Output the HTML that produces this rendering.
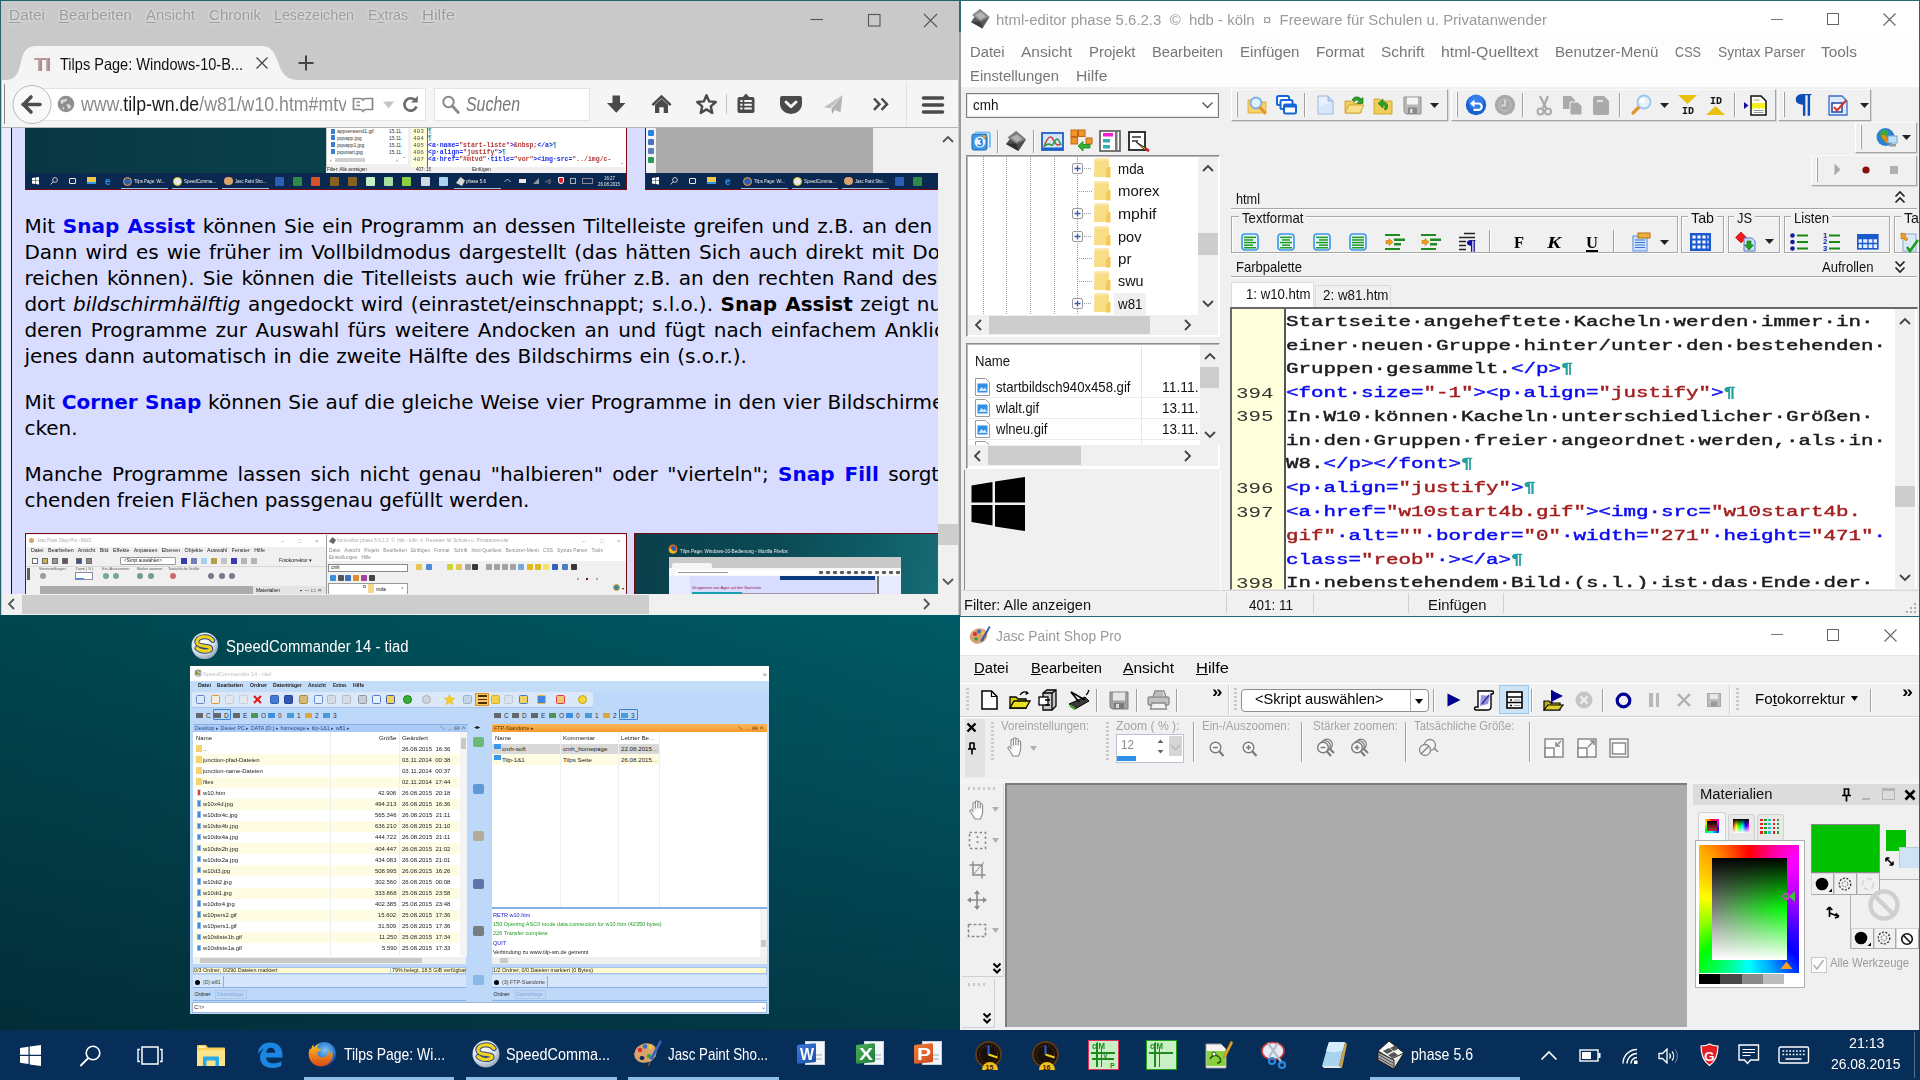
<!DOCTYPE html>
<html lang="de">
<head>
<meta charset="utf-8">
<title>Windows 10 Corner Snap</title>
<style>
*{box-sizing:border-box;margin:0;padding:0}
html,body{width:1920px;height:1080px;overflow:hidden}
body{position:relative;font-family:"Liberation Sans",sans-serif;font-size:15px;color:#000;background:#0a4a55}
.t{position:absolute;white-space:pre;line-height:1;transform-origin:0 0}
.b{position:absolute}
svg.b{overflow:visible}
.abs0{position:absolute;width:0;height:0}
.jl{position:absolute;white-space:nowrap;line-height:1;font-family:"DejaVu Sans",sans-serif;font-size:20px;color:#000}
#desk{position:absolute;left:0;top:0;width:1920px;height:1080px;background:linear-gradient(90deg,rgba(0,0,0,.22) 0px,rgba(0,0,0,0) 960px),linear-gradient(180deg,#005a65 615px,#033a48 1030px)}
#ff{position:absolute;left:0;top:0;width:960px;height:615px;background:#c9c9c9;overflow:hidden;border-top:1px solid #1d6570;border-left:1px solid #2a5f6c;border-right:1px solid #9c9c9c}
#ff u{text-decoration-thickness:1px;text-underline-offset:2px}
#he{position:absolute;left:960px;top:0;width:960px;height:616px;background:#f0f0f0;overflow:hidden;border-top:1px solid #2a6a75;border-left:1px solid #9c9c9c;border-right:1px solid #1b6b78}
#psp{position:absolute;left:960px;top:616px;width:960px;height:414px;background:#f0f0f0;overflow:hidden;border-top:1px solid #1b6b78;border-right:1px solid #1b6b78}
#sc{position:absolute;left:0;top:0;width:0;height:0}
#tb{position:absolute;left:0;top:1030px;width:1920px;height:50px;background:#062e58;overflow:hidden}

.code{font-family:"Liberation Mono",monospace}
.code span{font-weight:normal !important;-webkit-text-stroke:0.45px currentColor}

</style>
</head>
<body>
<div id="desk"></div>
<!-- ================= FIREFOX ================= -->
<div id="ff">
<div class="abs0" style="left:-1px;top:-1px">
<span class="t" style="left:9.0px;top:6.9px;font-size:15.5px;color:#9c9c9c;transform:scaleX(0.9949);text-shadow:0 0 4px #e4e4e4,0 0 2px #e0e0e0;"><u>D</u>atei</span>
<span class="t" style="left:59.0px;top:6.9px;font-size:15.5px;color:#9c9c9c;transform:scaleX(0.9737);text-shadow:0 0 4px #e4e4e4,0 0 2px #e0e0e0;"><u>B</u>earbeiten</span>
<span class="t" style="left:146.0px;top:6.9px;font-size:15.5px;color:#9c9c9c;transform:scaleX(0.9640);text-shadow:0 0 4px #e4e4e4,0 0 2px #e0e0e0;"><u>A</u>nsicht</span>
<span class="t" style="left:209.0px;top:6.9px;font-size:15.5px;color:#9c9c9c;transform:scaleX(0.9736);text-shadow:0 0 4px #e4e4e4,0 0 2px #e0e0e0;"><u>C</u>hronik</span>
<span class="t" style="left:274.0px;top:6.9px;font-size:15.5px;color:#9c9c9c;transform:scaleX(0.9191);text-shadow:0 0 4px #e4e4e4,0 0 2px #e0e0e0;"><u>L</u>esezeichen</span>
<span class="t" style="left:368.0px;top:6.9px;font-size:15.5px;color:#9c9c9c;transform:scaleX(0.9106);text-shadow:0 0 4px #e4e4e4,0 0 2px #e0e0e0;">E<u>x</u>tras</span>
<span class="t" style="left:422.0px;top:6.9px;font-size:15.5px;color:#9c9c9c;transform:scaleX(1.0642);text-shadow:0 0 4px #e4e4e4,0 0 2px #e0e0e0;"><u>H</u>ilfe</span>
<svg class="b" style="left:805px;top:8px;" width="140" height="24" viewBox="0 0 140 24"><path d="M5.500 11.500h12.500" stroke="#555" stroke-width="1.100" fill="none"/><rect x="63.500" y="6.500" width="11.500" height="11.500" fill="none" stroke="#555" stroke-width="1.100"/><path d="M119 6l13 13M132 6l-13 13" stroke="#555" stroke-width="1.100" fill="none"/></svg>
<svg class="b" style="left:4px;top:44px;" width="300" height="38" viewBox="0 0 300 38"><path d="M0 36 C12 36 14 30 17 18 C20 5 24 2 34 2 H256 C268 2 270 8 274 18 C278 30 282 36 296 36 V38 H0 Z" fill="#f5f5f5"/></svg>
<div class="b" style="left:32px;top:53px;width:20px;height:20px;background:#f4f2f2;"></div>
<span class="t" style="left:34.0px;top:54.9px;font-size:19px;font-weight:bold;color:#b89a9a;transform:scaleX(0.9476);text-shadow:1px 0 0 #8e6f72;">Tl</span>
<span class="t" style="left:60.0px;top:55.5px;font-size:16.5px;color:#111;transform:scaleX(0.8817);">Tilps Page: Windows-10-B...</span>
<svg class="b" style="left:255px;top:56px;" width="14" height="14" viewBox="0 0 14 14"><path d="M1.5 1.5l11 11M12.5 1.5l-11 11" stroke="#444" stroke-width="1.3" fill="none"/></svg>
<svg class="b" style="left:297px;top:54px;" width="18" height="18" viewBox="0 0 18 18"><path d="M9 1.5v15M1.5 9h15" stroke="#444" stroke-width="2" fill="none"/></svg>
<div class="b" style="left:2px;top:80px;width:956px;height:48px;background:#f5f5f5;border-bottom:1px solid #b5b5b5;"></div>
<div class="b" style="left:4px;top:84px;width:1px;height:40px;background:#8a8a8a;"></div>
<div class="b" style="left:40px;top:88px;width:386px;height:33px;background:#fff;border:1px solid #e3e3e3;"></div>
<div class="b" style="left:434px;top:88px;width:156px;height:33px;background:#fff;border:1px solid #e3e3e3;"></div>
<svg class="b" style="left:11px;top:84px;" width="42" height="42" viewBox="0 0 42 42"><circle cx="21" cy="20.5" r="19" fill="#f9f9f9" stroke="#b9b9b9" stroke-width="1"/><path d="M12 20.5h17M12.5 20.5l7.5-7.5M12.5 20.5l7.5 7.5" stroke="#4c4c4c" stroke-width="3.6" fill="none" stroke-linecap="round" stroke-linejoin="round"/></svg>
<svg class="b" style="left:57px;top:95px;" width="18" height="18" viewBox="0 0 18 18"><circle cx="9" cy="9" r="8.3" fill="#8f8f8f"/><path d="M4 5c2-1 3 0 4-1s2 0 2 1-2 2-3 2-1 2-2 2-2-2-1-4zM10 9c2 0 4 1 4 2s-1 3-2 3-1-2-2-3 0-2 0-2zM6 12c1 0 2 1 1 2s-2 0-1-2z" fill="#d9d9d9"/></svg>
<div class="b" style="left:80px;top:90px;width:266px;height:28px;overflow:hidden;"><span class="t" style="left:1.0px;top:4.1px;font-size:20.5px;color:#8a8a8a;transform:scaleX(0.8647);">www.<span style="color:#1a1a1a">tilp-wn.de</span>/w81/w10.htm#mtv</span></div>
<svg class="b" style="left:352px;top:96px;" width="22" height="18" viewBox="0 0 22 18"><path d="M1.5 2.5h6.5c1.8 0 3 .8 3 2.2c0-1.400 1.200-2.200 3-2.200h6.500v11h-6.500c-1.200 0-2.300.6-3 1.700c-.7-1.100-1.800-1.700-3-1.700h-6.500z" fill="none" stroke="#8a8a8a" stroke-width="1.7"/><path d="M4.500 6h3.500M4.500 9.500h3.500" stroke="#8a8a8a" stroke-width="1.500"/></svg>
<svg class="b" style="left:382px;top:100px;" width="14" height="10" viewBox="0 0 14 10"><path d="M1 1.500h11l-5.500 7z" fill="#c4c4c4"/></svg>
<svg class="b" style="left:401px;top:95px;" width="18" height="18" viewBox="0 0 18 18"><path d="M14.200 5.200a6.200 6.200 0 1 0 1.300 6.300" fill="none" stroke="#6b6b6b" stroke-width="2.600"/><path d="M10 7.500h6.800v-6.800z" fill="#6b6b6b"/></svg>
<svg class="b" style="left:441px;top:94px;" width="20" height="22" viewBox="0 0 20 22"><circle cx="7.500" cy="8" r="5.200" fill="none" stroke="#8a8a8a" stroke-width="2"/><path d="M11.300 12l6 6.500" stroke="#8a8a8a" stroke-width="2.800" stroke-linecap="round"/></svg>
<span class="t" style="left:466.0px;top:94.5px;font-size:19.5px;font-style:italic;color:#777;transform:scaleX(0.8165);">Suchen</span>
<svg class="b" style="left:606px;top:94px;" width="21" height="20" viewBox="0 0 21 20"><path d="M6.500 1.500h7.500v7.500h5.500l-9.200 9.800l-9.300-9.800h5.500z" fill="#4a4a4a"/></svg>
<svg class="b" style="left:651px;top:94px;" width="21" height="20" viewBox="0 0 21 20"><path d="M10.500 0.800l10 9.400l-1.700 1.800l-8.300-7.800l-8.300 7.800l-1.700-1.800z" fill="#4a4a4a"/><path d="M4 10.800l6.500-6l6.500 6v8.200h-4.300v-5.800h-4.400v5.800h-4.300z" fill="#4a4a4a"/></svg>
<svg class="b" style="left:695px;top:93px;" width="23" height="22" viewBox="0 0 23 22"><path d="M11.500 2.300l2.700 6.100l6.600.6l-5 4.400l1.500 6.500l-5.800-3.500l-5.800 3.500l1.500-6.500l-5-4.400l6.600-.6z" fill="none" stroke="#4a4a4a" stroke-width="2.400" stroke-linejoin="round"/></svg>
<div class="b" style="left:726px;top:94px;width:1px;height:20px;background:#c6c6c6;"></div>
<svg class="b" style="left:736px;top:93px;" width="20" height="21" viewBox="0 0 20 21"><path d="M10 0.500l3.200 3.500h3.300a2 2 0 0 1 2 2v12a2 2 0 0 1-2 2h-13a2 2 0 0 1-2-2v-12a2 2 0 0 1 2-2h3.300z" fill="#4a4a4a"/><path d="M4.300 8h2.200M8.300 8h7.500M4.300 11.800h2.200M8.300 11.800h7.500M4.300 15.600h2.200M8.300 15.600h7.500" stroke="#f7f7f7" stroke-width="2"/></svg>
<svg class="b" style="left:779px;top:95px;" width="24" height="20" viewBox="0 0 24 20"><path d="M3 1h18a2 2 0 0 1 2 2v5.500a11 10.500 0 0 1-22 0v-5.500a2 2 0 0 1 2-2z" fill="#4a4a4a"/><path d="M7 7l5 4.800l5-4.800" fill="none" stroke="#f7f7f7" stroke-width="2.800" stroke-linecap="round" stroke-linejoin="round"/></svg>
<svg class="b" style="left:823px;top:94px;" width="21" height="21" viewBox="0 0 21 21"><path d="M19.500 1l-18.500 12.200l6.200 1.300z" fill="#c2c2c2"/><path d="M19.500 1l-11 13.500l9 3.800z" fill="#b4b4b4"/><path d="M8.500 14.500l0.500 5.500l2.700-4z" fill="#a8a8a8"/></svg>
<svg class="b" style="left:872px;top:97px;" width="18" height="15" viewBox="0 0 18 15"><path d="M2 1.500l5.500 5.700l-5.500 5.700M9.500 1.500l5.500 5.700l-5.500 5.700" fill="none" stroke="#4a4a4a" stroke-width="2.500"/></svg>
<div class="b" style="left:906px;top:82px;width:1px;height:44px;background:#e2e2e2;"></div>
<svg class="b" style="left:921px;top:95px;" width="24" height="20" viewBox="0 0 24 20"><path d="M2.500 3h19M2.500 10h19M2.500 17h19" stroke="#4a4a4a" stroke-width="3.600" stroke-linecap="round"/></svg>
<div class="b" style="left:2px;top:128px;width:936px;height:466px;background:#ececff;overflow:hidden"><div class="abs0" style="left:-2px;top:-128px">
<div class="b" style="left:11px;top:128px;width:927px;height:470px;background:#d8dcff;border-left:1.300px solid #10102a;"></div>
<div class="b" style="left:25px;top:124px;width:602px;height:66px;background:#0a3e48;border:1px solid #7a0a12;overflow:hidden;background:linear-gradient(90deg,#093741,#0a414b 50%,#093c46);"></div>
<div class="b" style="left:326px;top:128px;width:300px;height:45.5px;background:#f0f0f0;"></div>
<div class="b" style="left:327px;top:128px;width:81px;height:36px;background:#fff;"></div>
<div class="b" style="left:411px;top:128px;width:215px;height:39px;background:#fff;"></div>
<div class="b" style="left:411px;top:128px;width:16px;height:39px;background:#ffffd8;"></div>
<div class="b" style="left:427px;top:128px;width:0.6px;height:39px;background:#666;"></div>
<div class="b" style="left:331px;top:128.5px;width:3.5px;height:5px;background:#3a7fd0;"></div>
<span class="t" style="left:337.0px;top:129.3px;font-size:5px;color:#333;">appverwend1.gif</span>
<span class="t" style="left:389.0px;top:129.3px;font-size:5px;color:#333;">15.11.</span>
<span class="t" style="left:413.0px;top:129.4px;font-size:6px;font-family:'Liberation Mono',monospace;color:#555;transform:scaleX(1.0184);">403</span>
<div class="b" style="left:331px;top:135.4px;width:3.5px;height:5px;background:#3a7fd0;"></div>
<span class="t" style="left:337.0px;top:136.2px;font-size:5px;color:#333;">pqsapp.jpg</span>
<span class="t" style="left:389.0px;top:136.2px;font-size:5px;color:#333;">15.11.</span>
<span class="t" style="left:413.0px;top:136.3px;font-size:6px;font-family:'Liberation Mono',monospace;color:#555;transform:scaleX(1.0184);">404</span>
<div class="b" style="left:331px;top:142.3px;width:3.5px;height:5px;background:#3a7fd0;"></div>
<span class="t" style="left:337.0px;top:143.1px;font-size:5px;color:#333;">pqsapp1.jpg</span>
<span class="t" style="left:389.0px;top:143.1px;font-size:5px;color:#333;">15.11.</span>
<span class="t" style="left:413.0px;top:143.2px;font-size:6px;font-family:'Liberation Mono',monospace;color:#555;transform:scaleX(1.0184);">405</span>
<div class="b" style="left:331px;top:149.2px;width:3.5px;height:5px;background:#3a7fd0;"></div>
<span class="t" style="left:337.0px;top:150.0px;font-size:5px;color:#333;">pqsstart.jpg</span>
<span class="t" style="left:389.0px;top:150.0px;font-size:5px;color:#333;">15.11.</span>
<span class="t" style="left:413.0px;top:150.1px;font-size:6px;font-family:'Liberation Mono',monospace;color:#555;transform:scaleX(1.0184);">406</span>
<span class="t" style="left:413.0px;top:157.0px;font-size:6px;font-family:'Liberation Mono',monospace;color:#555;transform:scaleX(1.0184);">407</span>
<span class="t" style="left:427.5px;top:128.5px;font-size:6.5px;font-family:'Liberation Mono',monospace;font-weight:bold;transform:scaleX(0.9999);"><span style="color:#30a0a0">¶</span></span>
<span class="t" style="left:427.5px;top:135.8px;font-size:6.5px;font-family:'Liberation Mono',monospace;font-weight:bold;transform:scaleX(0.9999);"><span style="color:#30a0a0">¶</span></span>
<span class="t" style="left:427.5px;top:143.0px;font-size:6.5px;font-family:'Liberation Mono',monospace;font-weight:bold;transform:scaleX(0.9999);"><span style="color:#1c2cf0">&lt;a·name=</span><span style="color:#b03838">"start-liste"</span><span style="color:#1c2cf0">&gt;</span><span style="color:#b03838">&amp;nbsp;</span><span style="color:#1c2cf0">&lt;/a&gt;</span><span style="color:#30a0a0">¶</span></span>
<span class="t" style="left:427.5px;top:150.0px;font-size:6.5px;font-family:'Liberation Mono',monospace;font-weight:bold;transform:scaleX(0.9999);"><span style="color:#1c2cf0">&lt;p·align=</span><span style="color:#b03838">"justify"</span><span style="color:#1c2cf0">&gt;</span><span style="color:#30a0a0">¶</span></span>
<span class="t" style="left:427.5px;top:157.3px;font-size:6.5px;font-family:'Liberation Mono',monospace;font-weight:bold;transform:scaleX(0.9999);"><span style="color:#1c2cf0">&lt;a·href=</span><span style="color:#b03838">"#mtvd"</span><span style="color:#1c2cf0">·title=</span><span style="color:#b03838">"vor"</span><span style="color:#1c2cf0">&gt;&lt;img·src=</span><span style="color:#b03838">"../img/c-</span></span>
<div class="b" style="left:335px;top:158px;width:30px;height:4px;background:#d0d0d0;"></div>
<span class="t" style="left:330.0px;top:157.8px;font-size:5px;color:#555;">‹</span>
<span class="t" style="left:396.0px;top:157.8px;font-size:5px;color:#555;">›</span>
<span class="t" style="left:402.0px;top:153.8px;font-size:5px;color:#555;">⌄</span>
<span class="t" style="left:620.0px;top:159.8px;font-size:5px;color:#555;">⌄</span>
<div class="b" style="left:326px;top:128px;width:1px;height:40px;background:#c8c8c8;"></div>
<span class="t" style="left:327.0px;top:167.4px;font-size:5.2px;color:#222;transform:scaleX(0.8814);">Filter: Alle anzeigen</span>
<span class="t" style="left:416.0px;top:167.4px;font-size:5.2px;color:#222;transform:scaleX(0.8646);">407: 15</span>
<span class="t" style="left:472.0px;top:167.4px;font-size:5.2px;color:#222;transform:scaleX(0.9255);">Einfügen</span>
<div class="b" style="left:26px;top:173px;width:600px;height:16px;background:#0b2950;"></div>
<div class="b" style="left:645px;top:124px;width:300px;height:66px;background:#ababab;border:1px solid #7a0a12;"></div>
<div class="b" style="left:646px;top:128px;width:10px;height:45px;background:#f4f4f4;"></div>
<div class="b" style="left:648px;top:130px;width:6px;height:6px;background:#2a80e0;border-radius:1px;"></div>
<div class="b" style="left:648px;top:139px;width:6px;height:6px;background:#4a70c0;border-radius:1px;"></div>
<div class="b" style="left:648px;top:148px;width:6px;height:6px;background:#5a80c0;border-radius:1px;"></div>
<div class="b" style="left:648px;top:157px;width:6px;height:6px;background:#2a9a5a;border-radius:1px;"></div>
<div class="b" style="left:873px;top:128px;width:71px;height:45px;background:#f0f0f0;"></div>
<div class="b" style="left:646px;top:173px;width:298px;height:16px;background:#0b2950;"></div>
<svg class="b" style="left:32px;top:177px;" width="7" height="7" viewBox="0 0 7 7"><path d="M0 1l3-.500v3h-3zM3.500.400l3.500-.400v3.500h-3.500zM0 4h3v3l-3-.500zM3.500 4h3.500v3.500l-3.500-.500z" fill="#fff"/></svg><svg class="b" style="left:50px;top:177px;" width="8" height="8" viewBox="0 0 8 8"><circle cx="5" cy="3" r="2.400" fill="none" stroke="#e8e8e8" stroke-width=".800"/><path d="M3.300 4.700l-2.800 2.800" stroke="#e8e8e8" stroke-width=".900"/></svg><div class="b" style="left:69px;top:178px;width:7px;height:6px;border:0.800px solid #e8e8e8;border-radius:1px;"></div><div class="b" style="left:87px;top:177px;width:9px;height:7px;background:#f1c84a;border-bottom:2px solid #2b9ae8;"></div><span class="t" style="left:105.0px;top:176.5px;font-size:10px;font-weight:bold;color:#2b8fe0;">e</span><div class="b" style="left:123px;top:176.5px;width:9px;height:9px;background:#e66a1c;border-radius:5px;border:1.500px solid #f0a030;background:#2b5fb4;"></div><span class="t" style="left:134.0px;top:179.0px;font-size:5.3px;color:#f0f0f0;transform:scaleX(0.8076);">Tilps Page: Wi...</span><div class="b" style="left:173px;top:176.5px;width:9px;height:9px;background:#e8e8e8;border-radius:5px;border:1px solid #d8c030;"></div><span class="t" style="left:184.0px;top:179.0px;font-size:5.3px;color:#f0f0f0;transform:scaleX(0.8356);">SpeedComma...</span><div class="b" style="left:224px;top:177px;width:9px;height:8px;background:#d9a26c;border-radius:4px;"></div><span class="t" style="left:235.0px;top:179.0px;font-size:5.3px;color:#f0f0f0;transform:scaleX(0.7795);">Jasc Paint Sho...</span><div class="b" style="left:121px;top:187.5px;width:47px;height:1px;background:#9ac0e8;"></div><div class="b" style="left:172px;top:187.5px;width:46px;height:1px;background:#9ac0e8;"></div><div class="b" style="left:222px;top:187.5px;width:47px;height:1px;background:#9ac0e8;"></div><div class="b" style="left:275.0px;top:176.5px;width:9px;height:9px;background:#2b5fb4;border-radius:1px;"></div><div class="b" style="left:293.2px;top:176.5px;width:9px;height:9px;background:#2e8b45;border-radius:1px;"></div><div class="b" style="left:311.4px;top:176.5px;width:9px;height:9px;background:#d6532a;border-radius:1px;"></div><div class="b" style="left:329.6px;top:176.5px;width:9px;height:9px;background:#8a6020;border-radius:1px;"></div><div class="b" style="left:347.8px;top:176.5px;width:9px;height:9px;background:#8a6020;border-radius:1px;"></div><div class="b" style="left:366.0px;top:176.5px;width:9px;height:9px;background:#c9efc4;border-radius:1px;"></div><div class="b" style="left:384.2px;top:176.5px;width:9px;height:9px;background:#a8e0a0;border-radius:1px;"></div><div class="b" style="left:402.4px;top:176.5px;width:9px;height:9px;background:#8ad040;border-radius:1px;"></div><div class="b" style="left:420.6px;top:176.5px;width:9px;height:9px;background:#d0d8e8;border-radius:1px;"></div><div class="b" style="left:438.79999999999995px;top:176.5px;width:9px;height:9px;background:#a8d4f0;border-radius:1px;"></div>
<svg class="b" style="left:652px;top:177px;" width="7" height="7" viewBox="0 0 7 7"><path d="M0 1l3-.500v3h-3zM3.500.400l3.500-.400v3.500h-3.500zM0 4h3v3l-3-.500zM3.500 4h3.500v3.500l-3.500-.500z" fill="#fff"/></svg><svg class="b" style="left:670px;top:177px;" width="8" height="8" viewBox="0 0 8 8"><circle cx="5" cy="3" r="2.400" fill="none" stroke="#e8e8e8" stroke-width=".800"/><path d="M3.300 4.700l-2.800 2.800" stroke="#e8e8e8" stroke-width=".900"/></svg><div class="b" style="left:689px;top:178px;width:7px;height:6px;border:0.800px solid #e8e8e8;border-radius:1px;"></div><div class="b" style="left:707px;top:177px;width:9px;height:7px;background:#f1c84a;border-bottom:2px solid #2b9ae8;"></div><span class="t" style="left:725.0px;top:176.5px;font-size:10px;font-weight:bold;color:#2b8fe0;">e</span><div class="b" style="left:743px;top:176.5px;width:9px;height:9px;background:#e66a1c;border-radius:5px;border:1.500px solid #f0a030;background:#2b5fb4;"></div><span class="t" style="left:754.0px;top:179.0px;font-size:5.3px;color:#f0f0f0;transform:scaleX(0.8076);">Tilps Page: Wi...</span><div class="b" style="left:793px;top:176.5px;width:9px;height:9px;background:#e8e8e8;border-radius:5px;border:1px solid #d8c030;"></div><span class="t" style="left:804.0px;top:179.0px;font-size:5.3px;color:#f0f0f0;transform:scaleX(0.8356);">SpeedComma...</span><div class="b" style="left:844px;top:177px;width:9px;height:8px;background:#d9a26c;border-radius:4px;"></div><span class="t" style="left:855.0px;top:179.0px;font-size:5.3px;color:#f0f0f0;transform:scaleX(0.7795);">Jasc Paint Sho...</span><div class="b" style="left:741px;top:187.5px;width:47px;height:1px;background:#9ac0e8;"></div><div class="b" style="left:792px;top:187.5px;width:46px;height:1px;background:#9ac0e8;"></div><div class="b" style="left:842px;top:187.5px;width:47px;height:1px;background:#9ac0e8;"></div><div class="b" style="left:895.0px;top:176.5px;width:9px;height:9px;background:#2b5fb4;border-radius:1px;"></div><div class="b" style="left:913.2px;top:176.5px;width:9px;height:9px;background:#2e8b45;border-radius:1px;"></div><div class="b" style="left:931.4px;top:176.5px;width:9px;height:9px;background:#d6532a;border-radius:1px;"></div>
<div class="b" style="left:922px;top:173px;width:16px;height:16px;background:#0b2950;"></div>
<svg class="b" style="left:455.5px;top:176.5px;" width="9" height="9" viewBox="0 0 9 9"><path d="M4.500 0l4.500 3.500l-3 5.500l-6-3z" fill="#d8d8d8"/></svg>
<span class="t" style="left:466.0px;top:179.0px;font-size:5.3px;color:#f0f0f0;transform:scaleX(0.8591);">phase 5.6</span>
<div class="b" style="left:454px;top:187.5px;width:47px;height:1px;background:#9ac0e8;"></div>
<svg class="b" style="left:504px;top:178px;" width="7" height="5" viewBox="0 0 7 5"><path d="M.500 4l3-3l3 3" fill="none" stroke="#ddd" stroke-width=".800"/></svg>
<div class="b" style="left:519px;top:178.5px;width:7px;height:4.5px;background:#e8e8e8;"></div>
<div class="b" style="left:533px;top:178px;width:6px;height:6px;background:#8a98a8;clip-path:polygon(100% 0,100% 100%,0 100%);"></div>
<span class="t" style="left:545.0px;top:179.3px;font-size:5px;color:#ccc;">◁)</span>
<div class="b" style="left:558px;top:177px;width:6px;height:7px;background:#e41e26;border-radius:1px 1px 3px 3px;border:0.600px solid #fff;"></div>
<div class="b" style="left:570px;top:177.5px;width:6px;height:6px;border:0.700px solid #aab;"></div>
<div class="b" style="left:582px;top:178px;width:11px;height:5.5px;border:0.700px solid #889;"></div>
<span class="t" style="left:604.0px;top:177.1px;font-size:4.6px;color:#e8e8e8;transform:scaleX(0.9556);">16:27</span>
<span class="t" style="left:598.0px;top:183.1px;font-size:4.6px;color:#e8e8e8;transform:scaleX(0.9556);">26.08.2015</span>
<div class="jl" style="left:24.4px;top:215.6px;word-spacing:1.36px">Mit <span style="font-weight:bold;color:#0000f0;">Snap Assist</span> können Sie ein Programm an dessen Tiltelleiste greifen und z.B. an den Bildschirmrand</div>
<div class="jl" style="left:24.4px;top:241.6px;word-spacing:1.68px">Dann wird es wie früher im Vollbildmodus dargestellt (das hätten Sich auch direkt mit Doppelklick</div>
<div class="jl" style="left:24.4px;top:267.6px;word-spacing:1.85px">reichen können). Sie können die Titelleists auch wie früher z.B. an den rechten Rand des Bildschirms</div>
<div class="jl" style="left:24.4px;top:293.6px;word-spacing:1.20px">dort <span style="font-style:italic;">bildschirmhälftig</span> angedockt wird (einrastet/einschnappt; s.l.o.). <span style="font-weight:bold;">Snap Assist</span> zeigt nun die an</div>
<div class="jl" style="left:24.4px;top:319.6px;word-spacing:2.26px">deren Programme zur Auswahl fürs weitere Andocken an und fügt nach einfachem Anklicken</div>
<div class="jl" style="left:24.4px;top:345.6px;word-spacing:0.72px">jenes dann automatisch in die zweite Hälfte des Bildschirms ein (s.o.r.).</div>
<div class="jl" style="left:24.4px;top:391.6px;word-spacing:0.33px">Mit <span style="font-weight:bold;color:#0000f0;">Corner Snap</span> können Sie auf die gleiche Weise vier Programme in den vier Bildschirmecken</div>
<div class="jl" style="left:24.4px;top:417.6px;word-spacing:-1.00px">cken.</div>
<div class="jl" style="left:24.4px;top:463.6px;word-spacing:3.04px">Manche Programme lassen sich nicht genau "halbieren" oder "vierteln"; <span style="font-weight:bold;color:#0000f0;">Snap Fill</span> sorgt dafür</div>
<div class="jl" style="left:24.4px;top:489.6px;word-spacing:-0.26px">chenden freien Flächen passgenau gefüllt werden.</div>
<div class="b" style="left:25px;top:533px;width:602px;height:70px;background:#f0f0f0;border:1px solid #7a0a12;"></div>
<div class="abs0" style="left:0;top:0.800px">
<div class="b" style="left:26px;top:534px;width:300px;height:12px;background:#fff;"></div>
<div class="b" style="left:327px;top:534px;width:299px;height:26px;background:#fff;"></div>
<div class="b" style="left:326px;top:534px;width:1px;height:60px;background:#9a9a9a;"></div>
<div class="b" style="left:29px;top:537px;width:5px;height:5px;background:#d9a26c;border-radius:3px;"></div>
<svg class="b" style="left:329px;top:536px;" width="7" height="7" viewBox="0 0 7 7"><path d="M3.500 0l3.500 3l-2.500 4l-4.500-2.500z" fill="#666"/></svg>
<span class="t" style="left:37.0px;top:538.4px;font-size:4.8px;color:#aaa;transform:scaleX(0.9242);">Jasc Paint Shop Pro - Bild3</span>
<span class="t" style="left:337.0px;top:538.4px;font-size:4.8px;color:#aaa;transform:scaleX(0.9719);">html-editor phase 5.6.2.3  ©  hdb - köln  ¤  Freeware für Schulen u. Privatanwender</span>
<span class="t" style="left:281.0px;top:538.3px;font-size:5.5px;color:#999;">–</span>
<span class="t" style="left:298.0px;top:538.3px;font-size:5.5px;color:#999;">□</span>
<span class="t" style="left:315.0px;top:538.3px;font-size:5.5px;color:#999;">×</span>
<span class="t" style="left:582.0px;top:538.3px;font-size:5.5px;color:#999;">–</span>
<span class="t" style="left:600.0px;top:538.3px;font-size:5.5px;color:#999;">□</span>
<span class="t" style="left:617.0px;top:538.3px;font-size:5.5px;color:#999;">×</span>
<span class="t" style="left:31.0px;top:548.4px;font-size:4.8px;color:#222;transform:scaleX(1.1106);">Datei   Bearbeiten   Ansicht   Bild   Effekte   Anpassen   Ebenen   Objekte   Auswahl   Fenster   Hilfe</span>
<span class="t" style="left:329.0px;top:548.4px;font-size:4.8px;color:#888;transform:scaleX(1.0142);">Datei   Ansicht   Projekt   Bearbeiten   Einfügen   Format   Schrift   html-Quelltext   Benutzer-Menü   CSS   Syntax Parser   Tools</span>
<span class="t" style="left:329.0px;top:555.4px;font-size:4.8px;color:#888;transform:scaleX(0.9900);">Einstellungen   Hilfe</span>
<div class="b" style="left:120px;top:556px;width:56px;height:8px;background:#fff;border:0.500px solid #999;border-radius:1px;"></div>
<span class="t" style="left:124.0px;top:558.4px;font-size:4.6px;color:#222;transform:scaleX(0.9405);">&lt;Skript auswählen&gt;</span>
<span class="t" style="left:279.0px;top:558.4px;font-size:4.6px;color:#222;transform:scaleX(1.0598);">Fotokorrektur ▾</span>
<div class="b" style="left:32px;top:557px;width:6px;height:6px;background:#fff;opacity:.850;border:0.500px solid #555;"></div>
<div class="b" style="left:42px;top:557px;width:6px;height:6px;background:#c9a43a;opacity:.850;border:0.500px solid #555;"></div>
<div class="b" style="left:52px;top:557px;width:6px;height:6px;background:#888;opacity:.850;border:0.500px solid #555;"></div>
<div class="b" style="left:62px;top:557px;width:6px;height:6px;background:#444;opacity:.850;border:0.500px solid #555;"></div>
<div class="b" style="left:76px;top:557px;width:6px;height:6px;background:#1a3a7a;opacity:.850;border:0.500px solid #555;"></div>
<div class="b" style="left:86px;top:557px;width:6px;height:6px;background:#777;opacity:.850;border:0.500px solid #555;"></div>
<div class="b" style="left:181px;top:557px;width:6px;height:6px;background:#1a1aa0;opacity:.850;"></div>
<div class="b" style="left:191px;top:557px;width:6px;height:6px;background:#5a6ab0;opacity:.850;"></div>
<div class="b" style="left:201px;top:557px;width:6px;height:6px;background:#9ac8f0;opacity:.850;"></div>
<div class="b" style="left:211px;top:557px;width:6px;height:6px;background:#a8902a;opacity:.850;"></div>
<div class="b" style="left:221px;top:557px;width:6px;height:6px;background:#bbb;opacity:.850;"></div>
<div class="b" style="left:231px;top:557px;width:6px;height:6px;background:#1a1aa0;opacity:.850;"></div>
<div class="b" style="left:241px;top:557px;width:6px;height:6px;background:#aaa;opacity:.850;"></div>
<div class="b" style="left:251px;top:557px;width:6px;height:6px;background:#aaa;opacity:.850;"></div>
<div class="b" style="left:26px;top:565px;width:300px;height:0.6px;background:#d8d8d8;"></div>
<span class="t" style="left:39.0px;top:566.8px;font-size:3.8px;color:#555;transform:scaleX(0.9462);">Voreinstellungen:         Zoom ( % ):        Ein-/Auszoomen:       Stärker zoomen:     Tatsächliche Größe:</span>
<div class="b" style="left:40px;top:572px;width:6px;height:6px;background:#777;opacity:.700;border-radius:3px;"></div>
<div class="b" style="left:103px;top:572px;width:6px;height:6px;background:#3a8a6a;opacity:.700;border-radius:3px;"></div>
<div class="b" style="left:113px;top:572px;width:6px;height:6px;background:#3a8a6a;opacity:.700;border-radius:3px;"></div>
<div class="b" style="left:137px;top:572px;width:6px;height:6px;background:#3a7a6a;opacity:.700;border-radius:3px;"></div>
<div class="b" style="left:148px;top:572px;width:6px;height:6px;background:#3a7a6a;opacity:.700;border-radius:3px;"></div>
<div class="b" style="left:170px;top:572px;width:6px;height:6px;background:#c03030;opacity:.700;border-radius:3px;"></div>
<div class="b" style="left:208px;top:572px;width:6px;height:6px;background:#446;opacity:.700;border-radius:3px;"></div>
<div class="b" style="left:219px;top:572px;width:6px;height:6px;background:#446;opacity:.700;border-radius:3px;"></div>
<div class="b" style="left:229px;top:572px;width:6px;height:6px;background:#446;opacity:.700;border-radius:3px;"></div>
<div class="b" style="left:75px;top:571px;width:18px;height:8px;background:#fff;border:0.500px solid #88a;"></div>
<div class="b" style="left:76px;top:577px;width:8px;height:1px;background:#2f8fe8;"></div>
<div class="b" style="left:27px;top:567px;width:3px;height:12px;background:#222;opacity:.700;"></div>
<div class="b" style="left:40px;top:585.5px;width:213px;height:9px;background:#ababab;"></div>
<div class="b" style="left:26px;top:585.5px;width:14px;height:9px;background:#f0f0f0;"></div>
<div class="b" style="left:253px;top:585.5px;width:73px;height:9px;background:#e4e4e4;"></div>
<span class="t" style="left:256.0px;top:587.9px;font-size:4.8px;color:#111;transform:scaleX(1.0222);">Materialien</span>
<span class="t" style="left:300.0px;top:588.2px;font-size:4.5px;color:#444;transform:scaleX(1.6674);">▪ – □ ×</span>
<div class="b" style="left:328px;top:563px;width:80px;height:8px;background:#fff;border:0.500px solid #888;"></div>
<span class="t" style="left:331.0px;top:565.4px;font-size:4.6px;color:#111;">cmh</span>
<div class="b" style="left:411px;top:561px;width:202px;height:11px;background:#f0f0f0;"></div>
<div class="b" style="left:416px;top:563.5px;width:6px;height:6px;background:#e8c040;opacity:.900;border-radius:1px;"></div>
<div class="b" style="left:426px;top:563.5px;width:6px;height:6px;background:#3a7fd0;opacity:.900;border-radius:1px;"></div>
<div class="b" style="left:438px;top:563.5px;width:6px;height:6px;background:#e8f0fc;opacity:.900;border-radius:1px;"></div>
<div class="b" style="left:447px;top:563.5px;width:6px;height:6px;background:#c8d020;opacity:.900;border-radius:1px;"></div>
<div class="b" style="left:456px;top:563.5px;width:6px;height:6px;background:#e0c040;opacity:.900;border-radius:1px;"></div>
<div class="b" style="left:465px;top:563.5px;width:6px;height:6px;background:#999;opacity:.900;border-radius:1px;"></div>
<div class="b" style="left:472px;top:563.5px;width:6px;height:6px;background:#222;opacity:.900;border-radius:1px;"></div>
<div class="b" style="left:486px;top:563.5px;width:6px;height:6px;background:#999;opacity:.900;border-radius:1px;"></div>
<div class="b" style="left:494px;top:563.5px;width:6px;height:6px;background:#999;opacity:.900;border-radius:1px;"></div>
<div class="b" style="left:502px;top:563.5px;width:6px;height:6px;background:#999;opacity:.900;border-radius:1px;"></div>
<div class="b" style="left:510px;top:563.5px;width:6px;height:6px;background:#999;opacity:.900;border-radius:1px;"></div>
<div class="b" style="left:518px;top:563.5px;width:6px;height:6px;background:#6aa0d8;opacity:.900;border-radius:1px;"></div>
<div class="b" style="left:527px;top:563.5px;width:6px;height:6px;background:#e0b000;opacity:.900;border-radius:1px;"></div>
<div class="b" style="left:535px;top:563.5px;width:6px;height:6px;background:#e0b000;opacity:.900;border-radius:1px;"></div>
<div class="b" style="left:543px;top:563.5px;width:6px;height:6px;background:#f0e060;opacity:.900;border-radius:1px;"></div>
<div class="b" style="left:552px;top:563.5px;width:6px;height:6px;background:#2050b0;opacity:.900;border-radius:1px;"></div>
<div class="b" style="left:562px;top:563.5px;width:6px;height:6px;background:#3a70c0;opacity:.900;border-radius:1px;"></div>
<div class="b" style="left:571px;top:563.5px;width:6px;height:6px;background:#222;opacity:.900;border-radius:1px;"></div>
<div class="b" style="left:560px;top:573px;width:52px;height:8px;background:#f0f0f0;"></div>
<div class="b" style="left:586px;top:577px;width:2px;height:2px;background:#8a0c0c;"></div>
<div class="b" style="left:577px;top:577px;width:2px;height:2px;background:#aaa;"></div>
<div class="b" style="left:596px;top:577px;width:2px;height:2px;background:#aaa;"></div>
<div class="b" style="left:330.0px;top:574.5px;width:6px;height:6px;background:#3a8fd8;border-radius:1px;"></div>
<div class="b" style="left:337.7px;top:574.5px;width:6px;height:6px;background:#555;border-radius:1px;"></div>
<div class="b" style="left:345.4px;top:574.5px;width:6px;height:6px;background:#3a70c0;border-radius:1px;"></div>
<div class="b" style="left:353.1px;top:574.5px;width:6px;height:6px;background:#e08a2a;border-radius:1px;"></div>
<div class="b" style="left:360.8px;top:574.5px;width:6px;height:6px;background:#a040a0;border-radius:1px;"></div>
<div class="b" style="left:368.5px;top:574.5px;width:6px;height:6px;background:#444;border-radius:1px;"></div>
<div class="b" style="left:328px;top:582px;width:80px;height:12px;background:#fff;border:0.500px solid #999;"></div>
<div class="b" style="left:363px;top:584px;width:3px;height:3px;border:0.500px solid #999;"></div>
<div class="b" style="left:368px;top:583px;width:6px;height:9px;background:#f7d98a;"></div>
<span class="t" style="left:376.0px;top:585.8px;font-size:5px;color:#111;">mda</span>
<span class="t" style="left:401.0px;top:585.8px;font-size:5px;color:#555;">^</span>
<div class="b" style="left:613px;top:583px;width:7px;height:7px;background:#3a8a9a;border-radius:4px;border:1px solid #e8a030;"></div>
<span class="t" style="left:621.5px;top:586.6px;font-size:4px;color:#222;">▾</span>
</div>
<div class="b" style="left:634px;top:533px;width:310px;height:70px;background:#0b4f5a;border:1px solid #7a0a12;background:linear-gradient(100deg,#0a3f4a 0%,#0b4a55 45%,#0e5c66 75%,#176e76 100%);"></div>
<svg class="b" style="left:668px;top:544px;" width="10" height="10" viewBox="0 0 10 10"><circle cx="5" cy="5" r="4.500" fill="#e66a1c"/><circle cx="5.500" cy="4.500" r="2.500" fill="#2b5fb4"/><path d="M1 5a4 4 0 0 0 8 1c-1 2-5 2-6-2z" fill="#f6b21a"/></svg>
<span class="t" style="left:680.0px;top:548.5px;font-size:5.3px;color:#f0f0f0;transform:scaleX(0.8785);">Tilps Page: Windows-10-Bedienung - Mozilla Firefox</span>
<div class="b" style="left:669px;top:557px;width:232px;height:37px;background:#f2f2f2;"></div>
<div class="b" style="left:669px;top:557px;width:232px;height:11px;background:#c9c9c9;"></div>
<div class="b" style="left:672px;top:563px;width:40px;height:6px;background:#f5f5f5;border-radius:2px 2px 0 0;"></div>
<div class="b" style="left:669px;top:568px;width:232px;height:8px;background:#f7f7f7;"></div>
<div class="b" style="left:676px;top:569.5px;width:140px;height:5px;background:#fff;"></div>
<div class="b" style="left:678px;top:571.5px;width:50px;height:1.5px;background:#999;"></div>
<div class="b" style="left:669px;top:576px;width:232px;height:18px;background:#e8eaff;"></div>
<div class="b" style="left:690px;top:576px;width:186px;height:18px;background:#d8dcff;"></div>
<div class="b" style="left:780px;top:576px;width:95px;height:4px;background:#0b3a80;"></div>
<span class="t" style="left:692.0px;top:585.6px;font-size:4px;color:#a0104a;">Gruppieren von Apps auf der Startseite</span>
<div class="b" style="left:692px;top:592px;width:50px;height:2px;background:#18a0b0;"></div>
<div class="b" style="left:742px;top:593px;width:134px;height:1px;background:#99a;"></div>
<div class="b" style="left:877px;top:576px;width:1.5px;height:18px;background:#777;"></div>
<div class="b" style="left:819px;top:570.5px;width:3.5px;height:3.5px;background:#333;border-radius:1px;opacity:.800;"></div>
<div class="b" style="left:826px;top:570.5px;width:3.5px;height:3.5px;background:#333;border-radius:1px;opacity:.800;"></div>
<div class="b" style="left:833px;top:570.5px;width:3.5px;height:3.5px;background:#333;border-radius:1px;opacity:.800;"></div>
<div class="b" style="left:840px;top:570.5px;width:3.5px;height:3.5px;background:#333;border-radius:1px;opacity:.800;"></div>
<div class="b" style="left:847px;top:570.5px;width:3.5px;height:3.5px;background:#333;border-radius:1px;opacity:.800;"></div>
<div class="b" style="left:854px;top:570.5px;width:3.5px;height:3.5px;background:#333;border-radius:1px;opacity:.800;"></div>
<div class="b" style="left:861px;top:570.5px;width:3.5px;height:3.5px;background:#333;border-radius:1px;opacity:.800;"></div>
<div class="b" style="left:868px;top:570.5px;width:3.5px;height:3.5px;background:#333;border-radius:1px;opacity:.800;"></div>
<div class="b" style="left:875px;top:570.5px;width:3.5px;height:3.5px;background:#333;border-radius:1px;opacity:.800;"></div>
<div class="b" style="left:882px;top:570.5px;width:3.5px;height:3.5px;background:#333;border-radius:1px;opacity:.800;"></div>
<div class="b" style="left:889px;top:570.5px;width:3.5px;height:3.5px;background:#333;border-radius:1px;opacity:.800;"></div>
<div class="b" style="left:896px;top:570.5px;width:3.5px;height:3.5px;background:#333;border-radius:1px;opacity:.800;"></div>
</div></div>
<div class="b" style="left:938px;top:128px;width:20px;height:466px;background:#f0f0f0;"></div>
<div class="b" style="left:938px;top:524px;width:20px;height:21px;background:#cdcdcd;"></div>
<svg class="b" style="left:941px;top:134px;" width="14" height="10" viewBox="0 0 14 10"><path d="M2 8l5-5l5 5" fill="none" stroke="#555" stroke-width="1.800"/></svg>
<svg class="b" style="left:941px;top:577px;" width="14" height="10" viewBox="0 0 14 10"><path d="M2 2l5 5l5-5" fill="none" stroke="#555" stroke-width="1.800"/></svg>
<div class="b" style="left:2px;top:594px;width:956px;height:21px;background:#f0f0f0;"></div>
<div class="b" style="left:22px;top:595px;width:627px;height:19px;background:#cdcdcd;"></div>
<svg class="b" style="left:6px;top:597px;" width="10" height="14" viewBox="0 0 10 14"><path d="M8 2l-5 5l5 5" fill="none" stroke="#555" stroke-width="1.800"/></svg>
<svg class="b" style="left:922px;top:597px;" width="10" height="14" viewBox="0 0 10 14"><path d="M2 2l5 5l-5 5" fill="none" stroke="#555" stroke-width="1.800"/></svg>
</div>
</div>
<!-- ================= HTML EDITOR ================= -->
<div id="he">
<div class="abs0" style="left:-961px;top:-1px">
<div class="b" style="left:961px;top:1px;width:959px;height:37px;background:#fff;"></div>
<svg class="b" style="left:969px;top:8px;" width="22" height="22" viewBox="0 0 22 22"><path d="M11 1l9.500 8l-7 11.500l-11.500-6.500z" fill="#5a5a5a"/><path d="M11 1l9.500 8l-9 4.500l-8.500-6.500z" fill="#8a8a8a"/><path d="M6 7l6-3l5 4.500l-5.500 3z" fill="#b5b5b5"/><path d="M2 14l9.500-.500l2 7z" fill="#3c3c3c"/></svg>
<span class="t" style="left:996.0px;top:11.9px;font-size:15.5px;color:#9a9a9a;transform:scaleX(0.9642);">html-editor phase 5.6.2.3  ©  hdb - köln  ¤  Freeware für Schulen u. Privatanwender</span>
<svg class="b" style="left:1770px;top:7px;" width="130" height="24" viewBox="0 0 130 24"><path d="M1 12.500h12" stroke="#777" stroke-width="1" fill="none"/><rect x="57.500" y="6.500" width="11" height="11" fill="none" stroke="#666" stroke-width="1"/><path d="M113.500 6.500l12 12M125.500 6.500l-12 12" stroke="#666" stroke-width="1.100" fill="none"/></svg>
<div class="b" style="left:961px;top:38px;width:959px;height:49px;background:#fdfdfd;"></div>
<span class="t" style="left:969.5px;top:43.9px;font-size:15.5px;color:#777;transform:scaleX(0.9534);">Datei</span>
<span class="t" style="left:1020.5px;top:43.9px;font-size:15.5px;color:#777;transform:scaleX(1.0033);">Ansicht</span>
<span class="t" style="left:1088.5px;top:43.9px;font-size:15.5px;color:#777;transform:scaleX(0.9639);">Projekt</span>
<span class="t" style="left:1151.5px;top:43.9px;font-size:15.5px;color:#777;transform:scaleX(0.9470);">Bearbeiten</span>
<span class="t" style="left:1239.5px;top:43.9px;font-size:15.5px;color:#777;transform:scaleX(0.9723);">Einfügen</span>
<span class="t" style="left:1315.5px;top:43.9px;font-size:15.5px;color:#777;transform:scaleX(0.9880);">Format</span>
<span class="t" style="left:1380.5px;top:43.9px;font-size:15.5px;color:#777;transform:scaleX(0.9903);">Schrift</span>
<span class="t" style="left:1440.5px;top:43.9px;font-size:15.5px;color:#777;transform:scaleX(1.0197);">html-Quelltext</span>
<span class="t" style="left:1554.5px;top:43.9px;font-size:15.5px;color:#777;transform:scaleX(0.9766);">Benutzer-Menü</span>
<span class="t" style="left:1674.5px;top:43.9px;font-size:15.5px;color:#777;transform:scaleX(0.8158);">CSS</span>
<span class="t" style="left:1717.5px;top:43.9px;font-size:15.5px;color:#777;transform:scaleX(0.8937);">Syntax Parser</span>
<span class="t" style="left:1821.0px;top:43.9px;font-size:15.5px;color:#777;transform:scaleX(0.9949);">Tools</span>
<span class="t" style="left:969.5px;top:67.9px;font-size:15.5px;color:#777;transform:scaleX(0.9563);">Einstellungen</span>
<span class="t" style="left:1076.0px;top:67.9px;font-size:15.5px;color:#777;transform:scaleX(1.0159);">Hilfe</span>
<div class="b" style="left:966px;top:93px;width:253px;height:25px;background:#fff;border:1.500px solid #7d7d7d;box-shadow:inset 0 0 0 1px #e6e6e6;"></div>
<span class="t" style="left:972.5px;top:97.3px;font-size:15px;color:#111;transform:scaleX(0.8998);">cmh</span>
<svg class="b" style="left:1201px;top:101px;" width="13" height="9" viewBox="0 0 13 9"><path d="M1.500 1.500l5 5l5-5" fill="none" stroke="#555" stroke-width="1.400"/></svg>
<svg class="b" style="left:970px;top:131px;" width="21" height="21" viewBox="0 0 21 21"><rect x="2" y="3" width="15" height="16" rx="2" fill="#3d9ae8" stroke="#1b62b8"/><path d="M5 1.500h13a2 2 0 0 1 2 2v13" fill="none" stroke="#7cc0f4" stroke-width="2"/><circle cx="10" cy="11" r="5.500" fill="#eaf4ff"/><path d="M8 8.500c2-1.500 4.500-.500 4 1.500c-.300 1-2 1-2 1c2 0 3 1.500 2 2.800c-1 1.200-3 1-4.200 0" fill="none" stroke="#2a78d0" stroke-width="1.500"/><path d="M12 4l5 1l-3.500 3z" fill="#e8a020"/></svg>
<div class="b" style="left:997px;top:130px;width:1px;height:23px;background:#a0a0a0;"></div>
<div class="b" style="left:998px;top:130px;width:1px;height:23px;background:#fff;"></div>
<svg class="b" style="left:1005px;top:130px;" width="22" height="22" viewBox="0 0 22 22"><path d="M11 1l10 8.500l-7.500 11.500l-12.500-7z" fill="#4c4c4c"/><path d="M11 1l10 8.500l-9.500 4.500l-9-6.500z" fill="#7d7d7d"/><path d="M6 7.500l6-3l5.500 4.500l-6 3z" fill="#b0b0b0"/><path d="M1 14l10.500-.500l2 7.500z" fill="#303030"/></svg>
<div class="b" style="left:1033px;top:130px;width:1px;height:23px;background:#a0a0a0;"></div>
<div class="b" style="left:1034px;top:130px;width:1px;height:23px;background:#fff;"></div>
<svg class="b" style="left:1041px;top:132px;" width="23" height="19" viewBox="0 0 23 19"><rect x="1" y="1" width="21" height="17" fill="#cfe6fb" stroke="#1f5fc4" stroke-width="1.800"/><path d="M3 15c2-6 4-10 6.500-10s3.500 5 5.500 7s3 1 5 0" fill="none" stroke="#e03a2a" stroke-width="1.600"/><path d="M3 14c3-2 5-3 7-1s4-6 6-6s3 4 4 6" fill="none" stroke="#2f9c3f" stroke-width="1.600"/><rect x="1" y="15.500" width="21" height="2.500" fill="#1f5fc4"/></svg>
<svg class="b" style="left:1070px;top:129px;" width="23" height="23" viewBox="0 0 23 23"><rect x="1" y="1" width="6.500" height="6.500" fill="#f0962a" stroke="#c06a10"/><rect x="8.500" y="1" width="6.500" height="6.500" fill="#f0962a" stroke="#c06a10"/><rect x="1" y="8.500" width="6.500" height="6.500" fill="#f0962a" stroke="#c06a10"/><rect x="16" y="9" width="6" height="6" fill="#f0962a" stroke="#c06a10"/><path d="M8 17l5-4.500v3h7v3.500h-7v3z" fill="#32b432" stroke="#1a801a" stroke-width=".800"/></svg>
<svg class="b" style="left:1099px;top:130px;" width="22" height="22" viewBox="0 0 22 22"><rect x="1" y="1" width="20" height="20" fill="#fff" stroke="#555" stroke-width="1.600"/><rect x="16" y="1" width="2.500" height="20" fill="#777"/><rect x="4" y="3" width="10" height="3.500" fill="#f020d0"/><rect x="4" y="9" width="7" height="3.500" fill="#30b0b0"/><rect x="4" y="15" width="7" height="3.500" fill="#30b0b0"/></svg>
<svg class="b" style="left:1128px;top:131px;" width="23" height="22" viewBox="0 0 23 22"><rect x="1" y="1" width="16" height="18" fill="#fff" stroke="#222" stroke-width="1.800"/><path d="M4 6h9M4 10h6" stroke="#333" stroke-width="1.500"/><path d="M8 11l10 6l3 3l-4-1z" fill="#f0d020" stroke="#222" stroke-width="1"/><path d="M17 17l4 3" stroke="#d02020" stroke-width="2.500"/></svg>
<div class="b" style="left:966px;top:155px;width:254px;height:182px;background:#fff;border-top:1px solid #8c8c8c;border-left:1px solid #8c8c8c;border-right:1px solid #fff;border-bottom:1px solid #fff;box-shadow:inset 1px 1px 0 #b8b8b8;"></div>
<div class="b" style="left:968px;top:157px;width:230px;height:158px;background:#fff;"></div>
<div class="b" style="left:982.5px;top:157px;width:1px;height:158px;background:repeating-linear-gradient(180deg,#9a9a9a 0 1px,transparent 1px 2px);"></div>
<div class="b" style="left:1006.0px;top:157px;width:1px;height:158px;background:repeating-linear-gradient(180deg,#9a9a9a 0 1px,transparent 1px 2px);"></div>
<div class="b" style="left:1029.5px;top:157px;width:1px;height:158px;background:repeating-linear-gradient(180deg,#9a9a9a 0 1px,transparent 1px 2px);"></div>
<div class="b" style="left:1053.5px;top:157px;width:1px;height:158px;background:repeating-linear-gradient(180deg,#9a9a9a 0 1px,transparent 1px 2px);"></div>
<div class="b" style="left:1077.0px;top:157px;width:1px;height:158px;background:repeating-linear-gradient(180deg,#9a9a9a 0 1px,transparent 1px 2px);"></div>
<div class="b" style="left:1084px;top:168.3px;width:8px;height:1px;background:repeating-linear-gradient(90deg,#9a9a9a 0 1px,transparent 1px 2px);"></div>
<svg class="b" style="left:1072.0px;top:163.3px;" width="11" height="11" viewBox="0 0 11 11"><rect x="0.500" y="0.500" width="10" height="10" rx="1.500" fill="#fdfdfd" stroke="#9a9a9a"/><path d="M2.500 5.500h6M5.500 2.500v6" stroke="#3b5cad" stroke-width="1.300"/></svg>
<svg class="b" style="left:1093.5px;top:158.3px;" width="17" height="20" viewBox="0 0 17 20"><path d="M0.5 1.5a1 1 0 0 1 1-1h12.5a1 1 0 0 1 1 1v17.5h-15z" fill="#f8dc86"/><path d="M12 19.500v-7.500l2-3h2.500v10.500z" fill="#f2c95a"/><path d="M0.500 1.500a1 1 0 0 1 1-1h12.500a1 1 0 0 1 1 1v1h-15z" fill="#fbe8a8"/></svg>
<span class="t" style="left:1117.5px;top:161.1px;font-size:15px;color:#111;transform:scaleX(0.8910);">mda</span>
<div class="b" style="left:1079px;top:190.5px;width:13px;height:1px;background:repeating-linear-gradient(90deg,#9a9a9a 0 1px,transparent 1px 2px);"></div>
<svg class="b" style="left:1093.5px;top:180.5px;" width="17" height="20" viewBox="0 0 17 20"><path d="M0.5 1.5a1 1 0 0 1 1-1h12.5a1 1 0 0 1 1 1v17.5h-15z" fill="#f8dc86"/><path d="M12 19.500v-7.500l2-3h2.500v10.500z" fill="#f2c95a"/><path d="M0.500 1.500a1 1 0 0 1 1-1h12.500a1 1 0 0 1 1 1v1h-15z" fill="#fbe8a8"/></svg>
<span class="t" style="left:1117.5px;top:183.3px;font-size:15px;color:#111;transform:scaleX(0.9958);">morex</span>
<div class="b" style="left:1084px;top:213.3px;width:8px;height:1px;background:repeating-linear-gradient(90deg,#9a9a9a 0 1px,transparent 1px 2px);"></div>
<svg class="b" style="left:1072.0px;top:208.3px;" width="11" height="11" viewBox="0 0 11 11"><rect x="0.500" y="0.500" width="10" height="10" rx="1.500" fill="#fdfdfd" stroke="#9a9a9a"/><path d="M2.500 5.500h6M5.500 2.500v6" stroke="#3b5cad" stroke-width="1.300"/></svg>
<svg class="b" style="left:1093.5px;top:203.3px;" width="17" height="20" viewBox="0 0 17 20"><path d="M0.5 1.5a1 1 0 0 1 1-1h12.5a1 1 0 0 1 1 1v17.5h-15z" fill="#f8dc86"/><path d="M12 19.500v-7.500l2-3h2.500v10.500z" fill="#f2c95a"/><path d="M0.500 1.500a1 1 0 0 1 1-1h12.500a1 1 0 0 1 1 1v1h-15z" fill="#fbe8a8"/></svg>
<span class="t" style="left:1117.5px;top:206.1px;font-size:15px;color:#111;transform:scaleX(1.0496);">mphif</span>
<div class="b" style="left:1084px;top:236.2px;width:8px;height:1px;background:repeating-linear-gradient(90deg,#9a9a9a 0 1px,transparent 1px 2px);"></div>
<svg class="b" style="left:1072.0px;top:231.2px;" width="11" height="11" viewBox="0 0 11 11"><rect x="0.500" y="0.500" width="10" height="10" rx="1.500" fill="#fdfdfd" stroke="#9a9a9a"/><path d="M2.500 5.500h6M5.500 2.500v6" stroke="#3b5cad" stroke-width="1.300"/></svg>
<svg class="b" style="left:1093.5px;top:226.2px;" width="17" height="20" viewBox="0 0 17 20"><path d="M0.5 1.5a1 1 0 0 1 1-1h12.5a1 1 0 0 1 1 1v17.5h-15z" fill="#f8dc86"/><path d="M12 19.500v-7.500l2-3h2.500v10.500z" fill="#f2c95a"/><path d="M0.500 1.500a1 1 0 0 1 1-1h12.500a1 1 0 0 1 1 1v1h-15z" fill="#fbe8a8"/></svg>
<span class="t" style="left:1117.5px;top:229.0px;font-size:15px;color:#111;transform:scaleX(0.9717);">pov</span>
<div class="b" style="left:1079px;top:258.3px;width:13px;height:1px;background:repeating-linear-gradient(90deg,#9a9a9a 0 1px,transparent 1px 2px);"></div>
<svg class="b" style="left:1093.5px;top:248.3px;" width="17" height="20" viewBox="0 0 17 20"><path d="M0.5 1.5a1 1 0 0 1 1-1h12.5a1 1 0 0 1 1 1v17.5h-15z" fill="#f8dc86"/><path d="M12 19.500v-7.500l2-3h2.500v10.500z" fill="#f2c95a"/><path d="M0.500 1.500a1 1 0 0 1 1-1h12.500a1 1 0 0 1 1 1v1h-15z" fill="#fbe8a8"/></svg>
<span class="t" style="left:1117.5px;top:251.1px;font-size:15px;color:#111;transform:scaleX(1.0121);">pr</span>
<div class="b" style="left:1079px;top:280.5px;width:13px;height:1px;background:repeating-linear-gradient(90deg,#9a9a9a 0 1px,transparent 1px 2px);"></div>
<svg class="b" style="left:1093.5px;top:270.5px;" width="17" height="20" viewBox="0 0 17 20"><path d="M0.5 1.5a1 1 0 0 1 1-1h12.5a1 1 0 0 1 1 1v17.5h-15z" fill="#f8dc86"/><path d="M12 19.500v-7.500l2-3h2.500v10.500z" fill="#f2c95a"/><path d="M0.500 1.500a1 1 0 0 1 1-1h12.500a1 1 0 0 1 1 1v1h-15z" fill="#fbe8a8"/></svg>
<span class="t" style="left:1117.5px;top:273.3px;font-size:15px;color:#111;transform:scaleX(0.9559);">swu</span>
<div class="b" style="left:1084px;top:303.1px;width:8px;height:1px;background:repeating-linear-gradient(90deg,#9a9a9a 0 1px,transparent 1px 2px);"></div>
<svg class="b" style="left:1072.0px;top:298.1px;" width="11" height="11" viewBox="0 0 11 11"><rect x="0.500" y="0.500" width="10" height="10" rx="1.500" fill="#fdfdfd" stroke="#9a9a9a"/><path d="M2.500 5.500h6M5.500 2.500v6" stroke="#3b5cad" stroke-width="1.300"/></svg>
<svg class="b" style="left:1093.5px;top:293.1px;" width="17" height="20" viewBox="0 0 17 20"><path d="M0.5 1.5a1 1 0 0 1 1-1h12.5a1 1 0 0 1 1 1v17.5h-15z" fill="#f8dc86"/><path d="M12 19.500v-7.500l2-3h2.500v10.500z" fill="#f2c95a"/><path d="M0.500 1.500a1 1 0 0 1 1-1h12.500a1 1 0 0 1 1 1v1h-15z" fill="#fbe8a8"/></svg>
<div class="b" style="left:1114px;top:293px;width:32px;height:22px;background:#f0f0f0;"></div>
<span class="t" style="left:1117.5px;top:295.9px;font-size:15px;color:#111;transform:scaleX(0.8903);">w81</span>
<div class="b" style="left:1198px;top:157px;width:20px;height:158px;background:#f0f0f0;"></div>
<div class="b" style="left:1198px;top:233px;width:20px;height:22px;background:#cdcdcd;"></div>
<svg class="b" style="left:1202px;top:164px;" width="12" height="9" viewBox="0 0 12 9"><path d="M1 7l5.0-5l5.0 5" fill="none" stroke="#444" stroke-width="1.8"/></svg>
<svg class="b" style="left:1202px;top:299px;" width="12" height="9" viewBox="0 0 12 9"><path d="M1 2l5.0 5l5.0-5" fill="none" stroke="#444" stroke-width="1.8"/></svg>
<div class="b" style="left:968px;top:315px;width:250px;height:20px;background:#f0f0f0;"></div>
<div class="b" style="left:989px;top:316px;width:161px;height:18px;background:#cdcdcd;"></div>
<svg class="b" style="left:974px;top:319px;" width="9" height="12" viewBox="0 0 9 12"><path d="M7 1l-5 5l5 5" fill="none" stroke="#444" stroke-width="1.8"/></svg>
<svg class="b" style="left:1183px;top:319px;" width="9" height="12" viewBox="0 0 9 12"><path d="M2 1l5 5l-5 5" fill="none" stroke="#444" stroke-width="1.8"/></svg>
<div class="b" style="left:966px;top:343px;width:254px;height:126px;background:#fff;border-top:1px solid #8c8c8c;border-left:1px solid #8c8c8c;border-right:1px solid #fff;border-bottom:1px solid #fff;box-shadow:inset 1px 1px 0 #b8b8b8;"></div>
<div class="b" style="left:968px;top:345px;width:232px;height:100px;background:#fff;"></div>
<div class="b" style="left:1141px;top:346px;width:1px;height:99px;background:#e6e6e6;"></div>
<span class="t" style="left:975.0px;top:352.8px;font-size:15px;color:#111;transform:scaleX(0.8747);">Name</span>
<div class="b" style="left:968px;top:396.5px;width:232px;height:1px;background:#ececec;"></div>
<svg class="b" style="left:975px;top:377.5px;" width="15" height="18" viewBox="0 0 15 18"><path d="M0.500 0.500h10l4 4v13h-14z" fill="#fff" stroke="#9a9a9a"/><rect x="2.500" y="5.500" width="10" height="9" fill="#2f8fe6"/><path d="M3.500 13l3-4l2 2l1.500-1.500l2 3.500z" fill="#cfe8ff"/></svg>
<span class="t" style="left:995.5px;top:378.8px;font-size:15px;color:#111;transform:scaleX(0.8766);">startbildsch940x458.gif</span>
<span class="t" style="left:1161.5px;top:378.8px;font-size:15px;color:#111;transform:scaleX(0.9246);">11.11.</span>
<div class="b" style="left:968px;top:417.8px;width:232px;height:1px;background:#ececec;"></div>
<svg class="b" style="left:975px;top:398.8px;" width="15" height="18" viewBox="0 0 15 18"><path d="M0.500 0.500h10l4 4v13h-14z" fill="#fff" stroke="#9a9a9a"/><rect x="2.500" y="5.500" width="10" height="9" fill="#2f8fe6"/><path d="M3.500 13l3-4l2 2l1.500-1.500l2 3.500z" fill="#cfe8ff"/></svg>
<span class="t" style="left:995.5px;top:400.1px;font-size:15px;color:#111;transform:scaleX(0.8597);">wlalt.gif</span>
<span class="t" style="left:1161.5px;top:400.1px;font-size:15px;color:#111;transform:scaleX(0.8992);">13.11.</span>
<div class="b" style="left:968px;top:439px;width:232px;height:1px;background:#ececec;"></div>
<svg class="b" style="left:975px;top:420px;" width="15" height="18" viewBox="0 0 15 18"><path d="M0.500 0.500h10l4 4v13h-14z" fill="#fff" stroke="#9a9a9a"/><rect x="2.500" y="5.500" width="10" height="9" fill="#2f8fe6"/><path d="M3.500 13l3-4l2 2l1.500-1.500l2 3.500z" fill="#cfe8ff"/></svg>
<span class="t" style="left:995.5px;top:421.3px;font-size:15px;color:#111;transform:scaleX(0.8699);">wlneu.gif</span>
<span class="t" style="left:1161.5px;top:421.3px;font-size:15px;color:#111;transform:scaleX(0.8992);">13.11.</span>
<svg class="b" style="left:975px;top:441px;" width="15" height="4" viewBox="0 0 15 4"><path d="M0.500 4v-3.500h10l4 3.500" fill="#fff" stroke="#9a9a9a"/></svg>
<div class="b" style="left:1200px;top:345px;width:20px;height:100px;background:#f0f0f0;"></div>
<div class="b" style="left:1200px;top:367px;width:19px;height:21px;background:#cdcdcd;"></div>
<svg class="b" style="left:1204px;top:352px;" width="12" height="9" viewBox="0 0 12 9"><path d="M1 7l5.0-5l5.0 5" fill="none" stroke="#444" stroke-width="1.8"/></svg>
<svg class="b" style="left:1204px;top:430px;" width="12" height="9" viewBox="0 0 12 9"><path d="M1 2l5.0 5l5.0-5" fill="none" stroke="#444" stroke-width="1.8"/></svg>
<div class="b" style="left:968px;top:445px;width:250px;height:21px;background:#f0f0f0;"></div>
<div class="b" style="left:988px;top:446px;width:93px;height:19px;background:#cdcdcd;"></div>
<svg class="b" style="left:973px;top:450px;" width="9" height="12" viewBox="0 0 9 12"><path d="M7 1l-5 5l5 5" fill="none" stroke="#444" stroke-width="1.8"/></svg>
<svg class="b" style="left:1183px;top:450px;" width="9" height="12" viewBox="0 0 9 12"><path d="M2 1l5 5l-5 5" fill="none" stroke="#444" stroke-width="1.8"/></svg>
<div class="b" style="left:964px;top:470px;width:1px;height:121px;background:#8c8c8c;"></div>
<div class="b" style="left:1220px;top:470px;width:1px;height:121px;background:#fff;"></div>
<svg class="b" style="left:971px;top:477px;" width="55" height="55" viewBox="0 0 55 55"><path d="M0.500 8.500l21-3.500v20.500h-21zM24 4.500l30-4.500v25.500h-30zM0.500 28h21v20.500l-21-3.500zM24 28h30v26l-30-4.500z" fill="#000"/></svg>
<div class="b" style="left:1231px;top:89px;width:217px;height:32px;border-left:1px solid #fff;border-top:1px solid #fafafa;border-right:1px solid #a5a5a5;border-bottom:1px solid #a5a5a5;box-shadow:1px 1px 0 #d8d8d8;"></div><div class="b" style="left:1236px;top:92px;width:1px;height:25px;background:#fff;"></div><div class="b" style="left:1237px;top:92px;width:1px;height:25px;background:#a0a0a0;"></div>
<svg class="b" style="left:1247px;top:95px;" width="21" height="20" viewBox="0 0 21 20"><path d="M1 5h7l2 2h9v11h-18z" fill="#f5d36a" stroke="#d9a520" stroke-width=".800"/><circle cx="9" cy="8" r="5.500" fill="#dff0ff" stroke="#7aaee0" stroke-width="1.800"/><path d="M13 12.500l5 5.500" stroke="#e8902a" stroke-width="2.800" stroke-linecap="round"/></svg>
<svg class="b" style="left:1276px;top:95px;" width="21" height="20" viewBox="0 0 21 20"><rect x="1" y="1" width="12" height="9" rx="1.500" fill="#fff" stroke="#1565d8" stroke-width="2"/><rect x="4.500" y="5" width="12" height="9" rx="1.500" fill="#fff" stroke="#1565d8" stroke-width="2"/><rect x="8" y="9.500" width="12" height="9" rx="1.500" fill="#fff" stroke="#1565d8" stroke-width="2"/><rect x="8" y="9.500" width="12" height="3" fill="#1565d8"/></svg>
<div class="b" style="left:1304px;top:93px;width:1px;height:24px;background:#a0a0a0;"></div><div class="b" style="left:1305px;top:93px;width:1px;height:24px;background:#fff;"></div>
<svg class="b" style="left:1317px;top:95px;" width="17" height="20" viewBox="0 0 17 20"><path d="M1 1h10l5 5v13h-15z" fill="#e6f0fc" stroke="#9ab4dc"/><path d="M11 1v5h5" fill="#b8d0f0" stroke="#9ab4dc"/><path d="M2 12l13-5v11h-13z" fill="#d0e2f8" opacity=".700"/></svg>
<svg class="b" style="left:1344px;top:95px;" width="21" height="20" viewBox="0 0 21 20"><path d="M1 6h6l2 2h8v10h-16z" fill="#f2ce5a" stroke="#c89a20" stroke-width=".800"/><path d="M1 18l4-8h15l-4 8z" fill="#f8e08a" stroke="#c89a20" stroke-width=".800"/><path d="M8 5c2-4 7-4 9-1l2-1.500v6h-6l2-2c-1.500-1.800-4-1.500-5 .500z" fill="#2aa02a" stroke="#157015" stroke-width=".600"/></svg>
<svg class="b" style="left:1373px;top:95px;" width="20" height="20" viewBox="0 0 20 20"><path d="M1 4h6l2 2h10v13h-18z" fill="#f2ce5a" stroke="#c89a20" stroke-width=".800"/><path d="M13 15c3-3 2-8-3-8v-3l-5 4.500l5 4.500v-3c2 0 3 2 1 4z" fill="#2aa02a" stroke="#157015" stroke-width=".600"/></svg>
<svg class="b" style="left:1403px;top:96px;" width="19" height="19" viewBox="0 0 19 19"><path d="M1 1h17v17h-15l-2-2z" fill="#b8b8b8" stroke="#909090"/><rect x="4" y="1.500" width="11" height="7" fill="#f4f4f4"/><rect x="5" y="11.500" width="9" height="6.500" fill="#8a8a8a"/><rect x="7" y="13" width="2.500" height="4" fill="#e0e0e0"/></svg>
<svg class="b" style="left:1430px;top:103px;" width="9" height="5" viewBox="0 0 9 5"><path d="M0 0h9l-4.5 5z" fill="#222"/></svg>
<div class="b" style="left:1451px;top:89px;width:325px;height:32px;border-left:1px solid #fff;border-top:1px solid #fafafa;border-right:1px solid #a5a5a5;border-bottom:1px solid #a5a5a5;box-shadow:1px 1px 0 #d8d8d8;"></div><div class="b" style="left:1456px;top:92px;width:1px;height:25px;background:#fff;"></div><div class="b" style="left:1457px;top:92px;width:1px;height:25px;background:#a0a0a0;"></div>
<svg class="b" style="left:1465px;top:94px;" width="22" height="22" viewBox="0 0 22 22"><circle cx="11" cy="11" r="10.200" fill="#1763d6"/><circle cx="11" cy="8" r="7.500" fill="#3d8cf0" opacity=".700"/><path d="M7 9.500h6.500a3.200 3.200 0 0 1 0 6.400h-5" fill="none" stroke="#fff" stroke-width="2.200"/><path d="M9.500 5.500l-4.500 4l4.500 4z" fill="#fff"/></svg>
<svg class="b" style="left:1494px;top:94px;" width="22" height="22" viewBox="0 0 22 22"><circle cx="11" cy="11" r="10.200" fill="#a9a9a9"/><circle cx="11" cy="11" r="6" fill="none" stroke="#c8c8c8" stroke-width="1"/><path d="M11 6v5.500h-4" fill="none" stroke="#d6d6d6" stroke-width="2"/></svg>
<div class="b" style="left:1522px;top:93px;width:1px;height:24px;background:#a0a0a0;"></div><div class="b" style="left:1523px;top:93px;width:1px;height:24px;background:#fff;"></div>
<svg class="b" style="left:1536px;top:95px;" width="17" height="21" viewBox="0 0 17 21"><path d="M4 1l6 12M12 1l-5 12" stroke="#a9a9a9" stroke-width="2.200"/><circle cx="4.500" cy="16.500" r="3" fill="none" stroke="#a9a9a9" stroke-width="2"/><circle cx="12" cy="16.500" r="3" fill="none" stroke="#a9a9a9" stroke-width="2"/></svg>
<svg class="b" style="left:1562px;top:95px;" width="21" height="21" viewBox="0 0 21 21"><path d="M1 1h8l4 4v9h-12z" fill="#aaa"/><path d="M8 7h8l4 4v9h-12z" fill="#aaa" stroke="#f0f0f0" stroke-width="1"/></svg>
<svg class="b" style="left:1591px;top:95px;" width="20" height="21" viewBox="0 0 20 21"><path d="M2 3a2 2 0 0 1 2-2h9l5 5v12a2 2 0 0 1-2 2h-12a2 2 0 0 1-2-2z" fill="#aaa"/><rect x="6" y="5" width="6" height="2" fill="#e4e4e4"/></svg>
<div class="b" style="left:1619px;top:93px;width:1px;height:24px;background:#a0a0a0;"></div><div class="b" style="left:1620px;top:93px;width:1px;height:24px;background:#fff;"></div>
<svg class="b" style="left:1630px;top:94px;" width="22" height="22" viewBox="0 0 22 22"><path d="M3 19l7-7" stroke="#e8922e" stroke-width="3.200" stroke-linecap="round"/><circle cx="14" cy="8" r="6.500" fill="#e4f2ff" stroke="#9cc4ec" stroke-width="1.800"/><circle cx="12.500" cy="6.500" r="2.500" fill="#fff"/></svg>
<svg class="b" style="left:1660px;top:103px;" width="9" height="5" viewBox="0 0 9 5"><path d="M0 0h9l-4.5 5z" fill="#222"/></svg>
<svg class="b" style="left:1677px;top:94px;" width="21" height="23" viewBox="0 0 21 23"><path d="M1 1h19l-9.500 9z" fill="#e8c010"/></svg>
<span class="t" style="left:1682.0px;top:106.0px;font-size:10.5px;font-family:'Liberation Mono',monospace;font-weight:bold;color:#111;transform:scaleX(0.9523);">ID</span>
<svg class="b" style="left:1705px;top:94px;" width="21" height="23" viewBox="0 0 21 23"><path d="M1 21h19l-9.500-9z" fill="#e8c010"/></svg>
<span class="t" style="left:1710.0px;top:96.0px;font-size:10.5px;font-family:'Liberation Mono',monospace;font-weight:bold;color:#111;transform:scaleX(0.9523);">ID</span>
<div class="b" style="left:1734px;top:93px;width:1px;height:24px;background:#a0a0a0;"></div><div class="b" style="left:1735px;top:93px;width:1px;height:24px;background:#fff;"></div>
<svg class="b" style="left:1744px;top:95px;" width="23" height="21" viewBox="0 0 23 21"><path d="M0 7l4.500 3.500l-4.500 3.500z" fill="#10109a"/><path d="M7 1h10l5 5v14h-15z" fill="#fff" stroke="#111" stroke-width="1.500"/><rect x="8" y="8" width="13" height="5.500" fill="#f8f020"/><path d="M9.500 5h6M9.500 15.500h10M9.500 17.500h10" stroke="#999" stroke-width="1"/></svg>
<div class="b" style="left:1778px;top:89px;width:93px;height:32px;border-left:1px solid #fff;border-top:1px solid #fafafa;border-right:1px solid #a5a5a5;border-bottom:1px solid #a5a5a5;box-shadow:1px 1px 0 #d8d8d8;"></div><div class="b" style="left:1783px;top:92px;width:1px;height:25px;background:#fff;"></div><div class="b" style="left:1784px;top:92px;width:1px;height:25px;background:#a0a0a0;"></div>
<span class="t" style="left:1794.0px;top:90.4px;font-size:27px;font-family:'Liberation Serif',serif;font-weight:bold;color:#0a4fb8;transform:scaleX(1.3030);">¶</span>
<svg class="b" style="left:1828px;top:95px;" width="20" height="21" viewBox="0 0 20 21"><path d="M1 1h13l5 5v14h-18z" fill="#dfeafc" stroke="#3a6cc8" stroke-width="1.300"/><rect x="4" y="8" width="10" height="9" fill="#fff" stroke="#2a50a8" stroke-width="1.600"/><path d="M6 12l3 3.500l9-10" fill="none" stroke="#e03020" stroke-width="2"/></svg>
<svg class="b" style="left:1860px;top:103px;" width="9" height="5" viewBox="0 0 9 5"><path d="M0 0h9l-4.5 5z" fill="#222"/></svg>
<div class="b" style="left:1855px;top:122px;width:62px;height:31px;border-left:1px solid #fff;border-top:1px solid #fafafa;border-right:1px solid #a5a5a5;border-bottom:1px solid #a5a5a5;box-shadow:1px 1px 0 #d8d8d8;"></div><div class="b" style="left:1860px;top:125px;width:1px;height:24px;background:#fff;"></div><div class="b" style="left:1861px;top:125px;width:1px;height:24px;background:#a0a0a0;"></div>
<svg class="b" style="left:1876px;top:127px;" width="22" height="21" viewBox="0 0 22 21"><circle cx="9.500" cy="10" r="9" fill="#2a82d8"/><path d="M4 6c2-3 6-4 8-2s-1 3-1 5s3 2 2 5s-4 2-5 0s-5-4-4-8z" fill="#3aa83a"/><path d="M6 8c2-1 5 1 5 3s3 3 1 5c-2 1-3-2-4-3s-3-3-2-5z" fill="#e88a20"/><rect x="12" y="9" width="9" height="7" fill="#bfe0f8" stroke="#7aa8c8"/><rect x="13" y="17" width="7" height="2.500" fill="#999"/></svg>
<svg class="b" style="left:1902px;top:135px;" width="9" height="5" viewBox="0 0 9 5"><path d="M0 0h9l-4.5 5z" fill="#222"/></svg>
<div class="b" style="left:1811px;top:155px;width:106px;height:31px;border-left:1px solid #fff;border-top:1px solid #fafafa;border-right:1px solid #a5a5a5;border-bottom:1px solid #a5a5a5;box-shadow:1px 1px 0 #d8d8d8;"></div><div class="b" style="left:1816px;top:158px;width:1px;height:24px;background:#fff;"></div><div class="b" style="left:1817px;top:158px;width:1px;height:24px;background:#a0a0a0;"></div>
<svg class="b" style="left:1834px;top:163px;" width="7" height="13" viewBox="0 0 7 13"><path d="M0.500 0.500l6 6l-6 6z" fill="#aaa"/></svg>
<svg class="b" style="left:1862px;top:166px;" width="8" height="8" viewBox="0 0 8 8"><circle cx="4" cy="4" r="3.600" fill="#8a0c0c"/></svg>
<div class="b" style="left:1890px;top:166px;width:8px;height:8px;background:#b0b0b0;"></div>
<div class="b" style="left:1231px;top:188px;width:686px;height:21px;background:#f0f0f0;border-bottom:1px solid #a8a8a8;box-shadow:0 1px 0 #fff;"></div>
<span class="t" style="left:1235.5px;top:190.7px;font-size:15px;color:#111;transform:scaleX(0.8469);">html</span>
<svg class="b" style="left:1894px;top:190px;" width="12" height="15" viewBox="0 0 12 15"><path d="M1.500 6.500l4.500-4.500l4.500 4.500M1.500 12.500l4.500-4.500l4.500 4.500" fill="none" stroke="#222" stroke-width="1.700"/></svg>
<div class="b" style="left:1231px;top:216px;width:447px;height:37px;border:1px solid #a8a8a8;box-shadow:1px 1px 0 #fff,inset 1px 1px 0 #fff;"></div><div class="b" style="left:1238.5px;top:214px;width:67.5px;height:5px;background:#f0f0f0;"></div><span class="t" style="left:1241.5px;top:209.8px;font-size:15px;color:#111;transform:scaleX(0.8783);">Textformat</span>
<div class="b" style="left:1681px;top:216px;width:43px;height:37px;border:1px solid #a8a8a8;box-shadow:1px 1px 0 #fff,inset 1px 1px 0 #fff;"></div><div class="b" style="left:1688px;top:214px;width:29px;height:5px;background:#f0f0f0;"></div><span class="t" style="left:1691.0px;top:209.8px;font-size:15px;color:#111;transform:scaleX(0.9510);">Tab</span>
<div class="b" style="left:1728px;top:216px;width:52px;height:37px;border:1px solid #a8a8a8;box-shadow:1px 1px 0 #fff,inset 1px 1px 0 #fff;"></div><div class="b" style="left:1733.5px;top:214px;width:21px;height:5px;background:#f0f0f0;"></div><span class="t" style="left:1736.5px;top:209.8px;font-size:15px;color:#111;transform:scaleX(0.8569);">JS</span>
<div class="b" style="left:1784px;top:216px;width:106px;height:37px;border:1px solid #a8a8a8;box-shadow:1px 1px 0 #fff,inset 1px 1px 0 #fff;"></div><div class="b" style="left:1790.5px;top:214px;width:41px;height:5px;background:#f0f0f0;"></div><span class="t" style="left:1793.5px;top:209.8px;font-size:15px;color:#111;transform:scaleX(0.8744);">Listen</span>
<div class="b" style="left:1894px;top:216px;width:31px;height:37px;border:1px solid #a8a8a8;box-shadow:1px 1px 0 #fff,inset 1px 1px 0 #fff;"></div><div class="b" style="left:1901px;top:214px;width:21px;height:5px;background:#f0f0f0;"></div><span class="t" style="left:1904.0px;top:209.8px;font-size:15px;color:#111;transform:scaleX(0.9468);">Ta</span>
<svg class="b" style="left:1241px;top:233px;" width="18" height="18" viewBox="0 0 18 18"><rect x="1" y="1" width="16" height="16" rx="3" fill="#eaf6ff" stroke="#3a98e8" stroke-width="1.600"/><rect x="3" y="3.6" width="12" height="1.500" fill="#1f9a1f"/><rect x="3" y="6.2" width="9" height="1.500" fill="#1f9a1f"/><rect x="3" y="8.8" width="12" height="1.500" fill="#1f9a1f"/><rect x="3" y="11.4" width="9" height="1.500" fill="#1f9a1f"/><rect x="3" y="14.0" width="12" height="1.500" fill="#1f9a1f"/></svg>
<svg class="b" style="left:1277px;top:233px;" width="18" height="18" viewBox="0 0 18 18"><rect x="1" y="1" width="16" height="16" rx="3" fill="#eaf6ff" stroke="#3a98e8" stroke-width="1.600"/><rect x="3" y="3.6" width="12" height="1.500" fill="#1f9a1f"/><rect x="5" y="6.2" width="8" height="1.500" fill="#1f9a1f"/><rect x="3" y="8.8" width="12" height="1.500" fill="#1f9a1f"/><rect x="5" y="11.4" width="8" height="1.500" fill="#1f9a1f"/><rect x="3" y="14.0" width="12" height="1.500" fill="#1f9a1f"/></svg>
<svg class="b" style="left:1313px;top:233px;" width="18" height="18" viewBox="0 0 18 18"><rect x="1" y="1" width="16" height="16" rx="3" fill="#eaf6ff" stroke="#3a98e8" stroke-width="1.600"/><rect x="3" y="3.6" width="12" height="1.500" fill="#1f9a1f"/><rect x="6" y="6.2" width="9" height="1.500" fill="#1f9a1f"/><rect x="3" y="8.8" width="12" height="1.500" fill="#1f9a1f"/><rect x="6" y="11.4" width="9" height="1.500" fill="#1f9a1f"/><rect x="3" y="14.0" width="12" height="1.500" fill="#1f9a1f"/></svg>
<svg class="b" style="left:1349px;top:233px;" width="18" height="18" viewBox="0 0 18 18"><rect x="1" y="1" width="16" height="16" rx="3" fill="#eaf6ff" stroke="#3a98e8" stroke-width="1.600"/><rect x="3" y="3.6" width="12" height="1.500" fill="#1f9a1f"/><rect x="3" y="6.2" width="12" height="1.500" fill="#1f9a1f"/><rect x="3" y="8.8" width="12" height="1.500" fill="#1f9a1f"/><rect x="3" y="11.4" width="12" height="1.500" fill="#1f9a1f"/><rect x="3" y="14.0" width="12" height="1.500" fill="#1f9a1f"/></svg>
<svg class="b" style="left:1385px;top:233px;" width="20" height="18" viewBox="0 0 20 18"><rect x="0" y="1" width="15" height="2" fill="#1f8a1f"/><rect x="0" y="15" width="15" height="2" fill="#1f8a1f"/><rect x="9" y="5.500" width="11" height="2.500" fill="#1f8a1f"/><rect x="9" y="10" width="7" height="2.500" fill="#1f8a1f"/><path d="M0 9l4-3.500v2h3v3h-3v2z" fill="#f0a020" stroke="#c87000" stroke-width=".600" transform="rotate(180 4 9)"/></svg>
<svg class="b" style="left:1421px;top:233px;" width="20" height="18" viewBox="0 0 20 18"><rect x="0" y="1" width="15" height="2" fill="#1f8a1f"/><rect x="0" y="15" width="15" height="2" fill="#1f8a1f"/><rect x="9" y="5.500" width="11" height="2.500" fill="#1f8a1f"/><rect x="9" y="10" width="7" height="2.500" fill="#1f8a1f"/><path d="M0 9l4-3.500v2h3v3h-3v2z" fill="#f0a020" stroke="#c87000" stroke-width=".600" transform="rotate(180 4 9)"/></svg>
<svg class="b" style="left:1458px;top:232px;" width="19" height="20" viewBox="0 0 19 20"><path d="M6 1.500h11M1 5.500h16M1 9.500h7M1 13.500h7M1 17.500h7" stroke="#222" stroke-width="1.600"/></svg>
<span class="t" style="left:1465.5px;top:238.4px;font-size:15px;font-family:'Liberation Serif',serif;font-weight:bold;color:#10109a;transform:scaleX(1.2961);">¶</span>
<div class="b" style="left:1489px;top:230px;width:1px;height:22px;background:#a0a0a0;"></div><div class="b" style="left:1490px;top:230px;width:1px;height:22px;background:#fff;"></div>
<span class="t" style="left:1514.0px;top:235.4px;font-size:16px;font-family:'Liberation Serif',serif;font-weight:bold;color:#000;transform:scaleX(1.0231);">F</span>
<span class="t" style="left:1547.0px;top:235.4px;font-size:16px;font-family:'Liberation Serif',serif;font-weight:bold;font-style:italic;color:#000;transform:scaleX(1.3118);">K</span>
<span class="t" style="left:1586.0px;top:235.4px;font-size:16px;font-family:'Liberation Serif',serif;font-weight:bold;color:#000;transform:scaleX(1.0385);text-decoration:underline;text-decoration-thickness:1.500px;text-underline-offset:2px;">U</span>
<div class="b" style="left:1613px;top:230px;width:1px;height:22px;background:#a0a0a0;"></div><div class="b" style="left:1614px;top:230px;width:1px;height:22px;background:#fff;"></div>
<svg class="b" style="left:1632px;top:232px;" width="19" height="20" viewBox="0 0 19 20"><rect x="1" y="4" width="14" height="15" fill="#cfe2fb" stroke="#5a8ad8"/><path d="M3 8h10M3 10.500h10M3 13h10M3 15.500h10" stroke="#3a78d8" stroke-width="1.200"/><rect x="6" y="1" width="12" height="5" fill="#f0b040" stroke="#b07010"/></svg>
<svg class="b" style="left:1660px;top:240px;" width="9" height="5" viewBox="0 0 9 5"><path d="M0 0h9l-4.5 5z" fill="#222"/></svg>
<svg class="b" style="left:1690px;top:233px;" width="21" height="18" viewBox="0 0 21 18"><rect x="0.500" y="0.500" width="20" height="17" fill="#fff" stroke="#1a58d0"/><path d="M0 1.500h21M0 6.500h21M0 11.500h21M0 16.500h21M1.500 0v18M6.500 0v18M11.500 0v18M16.500 0v18M19.500 0v18" stroke="#1a58d0" stroke-width="1.800"/></svg>
<svg class="b" style="left:1735px;top:231px;" width="21" height="21" viewBox="0 0 21 21"><path d="M6 1l5.500 5.500l-5.500 5.500l-5.500-5.500z" fill="#f01818" stroke="#a00000" stroke-width=".600"/><path d="M9 7h8l3 3v10h-11z" fill="#d0dcf4" stroke="#5a78c8"/><path d="M12 10h4v4h2.500l-4.500 5l-4.500-5h2.500z" fill="#20a020" stroke="#0a700a" stroke-width=".600"/></svg>
<svg class="b" style="left:1765px;top:239px;" width="9" height="5" viewBox="0 0 9 5"><path d="M0 0h9l-4.5 5z" fill="#222"/></svg>
<svg class="b" style="left:1790px;top:233px;" width="19" height="18" viewBox="0 0 19 18"><circle cx="2.500" cy="2.500" r="2.300" fill="#10209a"/><circle cx="2.500" cy="9" r="2.300" fill="#10209a"/><circle cx="2.500" cy="15.500" r="2.300" fill="#10209a"/><path d="M7 2.500h11M7 9h11M7 15.500h11" stroke="#158a15" stroke-width="2.200"/></svg>
<svg class="b" style="left:1822px;top:232px;" width="19" height="20" viewBox="0 0 19 20"><path d="M7 3.500h11M7 10h11M7 16.500h11" stroke="#158a15" stroke-width="2.200"/></svg>
<span class="t" style="left:1823.0px;top:231.6px;font-size:7.5px;font-weight:bold;color:#10209a;">1</span>
<span class="t" style="left:1823.0px;top:238.1px;font-size:7.5px;font-weight:bold;color:#10209a;">2</span>
<span class="t" style="left:1823.0px;top:244.6px;font-size:7.5px;font-weight:bold;color:#10209a;">3</span>
<svg class="b" style="left:1857px;top:234px;" width="22" height="16" viewBox="0 0 22 16"><rect x="0.800" y="0.800" width="20" height="14" fill="#e4f0ff" stroke="#1a58d0" stroke-width="1.600"/><path d="M0 4.500h21M0 9.500h21M5.500 1v14M11 1v14M16 1v14" stroke="#1a58d0" stroke-width="1.300"/><rect x="1" y="1" width="20" height="3" fill="#1a58d0"/></svg>
<svg class="b" style="left:1900px;top:232px;" width="19" height="21" viewBox="0 0 19 21"><rect x="3" y="2" width="13" height="17" fill="#dbe8fa" stroke="#8aa8d8"/><path d="M1 1l5 1l-1 2l3 3l-2 2l-3-3l-2 1z" fill="#f0a020" stroke="#b06a00" stroke-width=".600"/><path d="M7 15l3 4l8-11" fill="none" stroke="#1aa01a" stroke-width="2.600"/></svg>
<div class="b" style="left:1231px;top:257px;width:686px;height:20px;background:#f0f0f0;border-bottom:1px solid #a8a8a8;box-shadow:0 1px 0 #fff;"></div>
<span class="t" style="left:1235.5px;top:259.3px;font-size:15px;color:#111;transform:scaleX(0.8698);">Farbpalette</span>
<span class="t" style="left:1821.5px;top:259.3px;font-size:15px;color:#111;transform:scaleX(0.8699);">Aufrollen</span>
<svg class="b" style="left:1894px;top:259px;" width="12" height="15" viewBox="0 0 12 15"><path d="M1.500 2.500l4.500 4.500l4.500-4.500M1.500 8.500l4.500 4.500l4.500-4.500" fill="none" stroke="#222" stroke-width="1.700"/></svg>
<div class="b" style="left:1231px;top:282px;width:83px;height:26px;background:#fff;border:1px solid #dcdcdc;border-bottom:none;"></div>
<span class="t" style="left:1246.0px;top:286.3px;font-size:15px;color:#111;transform:scaleX(0.8791);">1: w10.htm</span>
<div class="b" style="left:1315px;top:285px;width:76px;height:22px;background:#f0f0f0;border:1px solid #dadada;border-bottom:none;"></div>
<span class="t" style="left:1323.0px;top:287.3px;font-size:15px;color:#111;transform:scaleX(0.8928);">2: w81.htm</span>
<div class="b" style="left:1230px;top:307px;width:688px;height:283px;background:#fff;border-top:2px solid #696969;border-left:2px solid #696969;border-right:1px solid #e8e8e8;border-bottom:1px solid #e8e8e8;"></div>
<div class="b" style="left:1232px;top:309px;width:52px;height:280px;background:#ffffdc;"></div>
<div class="b" style="left:1284px;top:309px;width:1.5px;height:280px;background:#555;"></div>
<div class="b" style="left:1232px;top:309px;width:663px;height:280px;overflow:hidden"><div class="abs0" style="left:-1232px;top:-309px">
<span class="t code" style="left:1286px;top:314.7px;font-size:15.5px;transform:scaleX(1.3439)"><span style="color:#1c1c1c;font-weight:bold;">Startseite·angeheftete·Kacheln·werden·immer·in·</span></span>
<span class="t code" style="left:1286px;top:338.5px;font-size:15.5px;transform:scaleX(1.3439)"><span style="color:#1c1c1c;font-weight:bold;">einer·neuen·Gruppe·hinter/unter·den·bestehenden·</span></span>
<span class="t code" style="left:1286px;top:362.3px;font-size:15.5px;transform:scaleX(1.3439)"><span style="color:#1c1c1c;font-weight:bold;">Gruppen·gesammelt.</span><span style="color:#0a0af0;font-weight:bold;">&lt;/p&gt;</span><span style="color:#22a0a0;font-weight:bold;">¶</span></span>
<span class="t code" style="left:1286px;top:386.1px;font-size:15.5px;transform:scaleX(1.3439)"><span style="color:#0a0af0;font-weight:bold;">&lt;font·size=</span><span style="color:#a31f1f;font-weight:bold;">"-1"</span><span style="color:#0a0af0;font-weight:bold;">&gt;&lt;p·align=</span><span style="color:#a31f1f;font-weight:bold;">"justify"</span><span style="color:#0a0af0;font-weight:bold;">&gt;</span><span style="color:#22a0a0;font-weight:bold;">¶</span></span>
<span class="t" style="left:1236.0px;top:386.6px;font-size:15.5px;font-family:'Liberation Mono',monospace;color:#333;transform:scaleX(1.3439);">394</span>
<span class="t code" style="left:1286px;top:409.8px;font-size:15.5px;transform:scaleX(1.3439)"><span style="color:#1c1c1c;font-weight:bold;">In·W10·können·Kacheln·unterschiedlicher·Größen·</span></span>
<span class="t" style="left:1236.0px;top:410.3px;font-size:15.5px;font-family:'Liberation Mono',monospace;color:#333;transform:scaleX(1.3439);">395</span>
<span class="t code" style="left:1286px;top:433.6px;font-size:15.5px;transform:scaleX(1.3439)"><span style="color:#1c1c1c;font-weight:bold;">in·den·Gruppen·freier·angeordnet·werden,·als·in·</span></span>
<span class="t code" style="left:1286px;top:457.4px;font-size:15.5px;transform:scaleX(1.3439)"><span style="color:#1c1c1c;font-weight:bold;">W8.</span><span style="color:#0a0af0;font-weight:bold;">&lt;/p&gt;&lt;/font&gt;</span><span style="color:#22a0a0;font-weight:bold;">¶</span></span>
<span class="t code" style="left:1286px;top:481.2px;font-size:15.5px;transform:scaleX(1.3439)"><span style="color:#0a0af0;font-weight:bold;">&lt;p·align=</span><span style="color:#a31f1f;font-weight:bold;">"justify"</span><span style="color:#0a0af0;font-weight:bold;">&gt;</span><span style="color:#22a0a0;font-weight:bold;">¶</span></span>
<span class="t" style="left:1236.0px;top:481.7px;font-size:15.5px;font-family:'Liberation Mono',monospace;color:#333;transform:scaleX(1.3439);">396</span>
<span class="t code" style="left:1286px;top:505.0px;font-size:15.5px;transform:scaleX(1.3439)"><span style="color:#0a0af0;font-weight:bold;">&lt;a·href=</span><span style="color:#a31f1f;font-weight:bold;">"w10start4b.gif"</span><span style="color:#0a0af0;font-weight:bold;">&gt;&lt;img·src=</span><span style="color:#a31f1f;font-weight:bold;">"w10start4b.</span></span>
<span class="t" style="left:1236.0px;top:505.5px;font-size:15.5px;font-family:'Liberation Mono',monospace;color:#333;transform:scaleX(1.3439);">397</span>
<span class="t code" style="left:1286px;top:528.7px;font-size:15.5px;transform:scaleX(1.3439)"><span style="color:#a31f1f;font-weight:bold;">gif"</span><span style="color:#0a0af0;font-weight:bold;">·alt=</span><span style="color:#a31f1f;font-weight:bold;">""</span><span style="color:#0a0af0;font-weight:bold;">·border=</span><span style="color:#a31f1f;font-weight:bold;">"0"</span><span style="color:#0a0af0;font-weight:bold;">·width=</span><span style="color:#a31f1f;font-weight:bold;">"271"</span><span style="color:#0a0af0;font-weight:bold;">·height=</span><span style="color:#a31f1f;font-weight:bold;">"471"</span><span style="color:#0a0af0;font-weight:bold;">·</span></span>
<span class="t code" style="left:1286px;top:552.5px;font-size:15.5px;transform:scaleX(1.3439)"><span style="color:#0a0af0;font-weight:bold;">class=</span><span style="color:#a31f1f;font-weight:bold;">"reob"</span><span style="color:#0a0af0;font-weight:bold;">·&gt;&lt;/a&gt;</span><span style="color:#22a0a0;font-weight:bold;">¶</span></span>
<span class="t code" style="left:1286px;top:576.3px;font-size:15.5px;transform:scaleX(1.3439)"><span style="color:#1c1c1c;font-weight:bold;">In·nebenstehendem·Bild·(s.l.)·ist·das·Ende·der·</span></span>
<span class="t" style="left:1236.0px;top:576.8px;font-size:15.5px;font-family:'Liberation Mono',monospace;color:#333;transform:scaleX(1.3439);">398</span>
</div></div>
<div class="b" style="left:1895px;top:309px;width:20px;height:280px;background:#f0f0f0;"></div>
<div class="b" style="left:1895px;top:486px;width:20px;height:21px;background:#cdcdcd;"></div>
<svg class="b" style="left:1899px;top:317px;" width="12" height="9" viewBox="0 0 12 9"><path d="M1 7l5.0-5l5.0 5" fill="none" stroke="#444" stroke-width="1.8"/></svg>
<svg class="b" style="left:1899px;top:573px;" width="12" height="9" viewBox="0 0 12 9"><path d="M1 2l5.0 5l5.0-5" fill="none" stroke="#444" stroke-width="1.8"/></svg>
<div class="b" style="left:961px;top:590px;width:959px;height:26px;background:#f0f0f0;border-top:1px solid #d7d7d7;"></div>
<div class="b" style="left:1226px;top:593px;width:1px;height:20px;background:#d0d0d0;"></div>
<div class="b" style="left:1313px;top:593px;width:1px;height:20px;background:#d0d0d0;"></div>
<div class="b" style="left:1408px;top:593px;width:1px;height:20px;background:#d0d0d0;"></div>
<div class="b" style="left:1503px;top:593px;width:1px;height:20px;background:#d0d0d0;"></div>
<span class="t" style="left:964.0px;top:596.9px;font-size:15.5px;color:#111;transform:scaleX(0.9388);">Filter: Alle anzeigen</span>
<span class="t" style="left:1249.0px;top:596.9px;font-size:15.5px;color:#111;transform:scaleX(0.8702);">401: 11</span>
<span class="t" style="left:1427.5px;top:596.9px;font-size:15.5px;color:#111;transform:scaleX(0.9560);">Einfügen</span>
<svg class="b" style="left:1905px;top:601px;" width="12" height="12" viewBox="0 0 12 12"><path d="M10 2v2M10 6v2M6 6v2M10 10v2M6 10v2M2 10v2" stroke="#b0b0b0" stroke-width="2"/></svg>
<div class="b" style="left:1917px;top:38px;width:3px;height:577px;background:#8fb0c8;opacity:.0;"></div>
</div>
</div>
<!-- ================= PAINT SHOP PRO ================= -->
<div id="psp">
<div class="abs0" style="left:-960px;top:-617px">
<div class="b" style="left:960px;top:617px;width:960px;height:38px;background:#fff;"></div>
<svg class="b" style="left:969px;top:625px;" width="22" height="22" viewBox="0 0 22 22"><ellipse cx="9.500" cy="11" rx="9" ry="7.500" fill="#d8a070" transform="rotate(-20 9.500 11)"/><circle cx="6" cy="9" r="2" fill="#d03030"/><circle cx="10" cy="6.500" r="2" fill="#3070d0"/><circle cx="14" cy="8" r="1.800" fill="#e8d030"/><circle cx="7" cy="14" r="1.800" fill="#30a040"/><path d="M20 1l1.500 1l-8 15l-2.500 1l.500-2.500z" fill="#3a5aa8"/><path d="M11 18l2.500-1l-2-1.500z" fill="#e8c070"/></svg>
<span class="t" style="left:995.5px;top:627.6px;font-size:15.5px;color:#9a9a9a;transform:scaleX(0.8936);">Jasc Paint Shop Pro</span>
<svg class="b" style="left:1770px;top:623px;" width="130" height="24" viewBox="0 0 130 24"><path d="M1 11.500h12" stroke="#777" stroke-width="1" fill="none"/><rect x="57.500" y="6.500" width="11" height="11" fill="none" stroke="#666" stroke-width="1"/><path d="M114.500 6.500l12 12M126.500 6.500l-12 12" stroke="#666" stroke-width="1.100" fill="none"/></svg>
<div class="b" style="left:960px;top:655px;width:960px;height:28px;background:#f0f0f0;border-top:1px solid #e4e4e4;"></div>
<span class="t" style="left:974.0px;top:660.1px;font-size:15.5px;color:#000;transform:scaleX(0.9534);"><u>D</u>atei</span>
<span class="t" style="left:1030.5px;top:660.1px;font-size:15.5px;color:#000;transform:scaleX(0.9470);"><u>B</u>earbeiten</span>
<span class="t" style="left:1123.0px;top:660.1px;font-size:15.5px;color:#000;transform:scaleX(1.0033);"><u>A</u>nsicht</span>
<span class="t" style="left:1195.5px;top:660.1px;font-size:15.5px;color:#000;transform:scaleX(1.0642);"><u>H</u>ilfe</span>
<div class="b" style="left:960px;top:683px;width:960px;height:34px;background:#f0f0f0;border-top:1px solid #fff;border-bottom:1px solid #d0d0d0;"></div>
<div class="b" style="left:966px;top:688px;width:3px;height:24px;background:repeating-linear-gradient(180deg,#c4c4c4 0 2px,transparent 2px 4px);opacity:.9;"></div>
<svg class="b" style="left:981px;top:690px;" width="17" height="20" viewBox="0 0 17 20"><path d="M1 1h9.500l5.500 5.500v12.500h-15z" fill="#fff" stroke="#000" stroke-width="1.500"/><path d="M10.500 1v5.500h5.500" fill="none" stroke="#000" stroke-width="1.200"/></svg>
<svg class="b" style="left:1009px;top:690px;" width="22" height="20" viewBox="0 0 22 20"><path d="M1 7h6l2 2h8v9h-16z" fill="#d8d000" stroke="#000" stroke-width="1.300"/><path d="M1 18l4-7h16l-4 7z" fill="#e8e020" stroke="#000" stroke-width="1.300"/><path d="M11 5c2-3 5-4 8-2" fill="none" stroke="#000" stroke-width="1.300"/><path d="M17 1l3 2.500l-3.500 1.500z" fill="#000"/></svg>
<svg class="b" style="left:1038px;top:689px;" width="19" height="22" viewBox="0 0 19 22"><path d="M5 4l4-3h9v16l-4 4h-9z" fill="#c8c8c8" stroke="#000" stroke-width="1.300"/><path d="M5 4h9v17M14 4l4-3" fill="none" stroke="#000" stroke-width="1.300"/><rect x="1" y="8" width="9" height="8" fill="#fff" stroke="#000" stroke-width="1.300"/><path d="M7 11h5M7 16h5" stroke="#000" stroke-width="1.300"/></svg>
<svg class="b" style="left:1067px;top:689px;" width="24" height="22" viewBox="0 0 24 22"><path d="M2 15l16-7l4 4l-14 8z" fill="#3a3a3a" stroke="#000"/><path d="M4 3l14 8" stroke="#000" stroke-width="1.600"/><path d="M4 3l8 10" stroke="#000" stroke-width="1.600"/><path d="M3 16.500l5 3.500" stroke="#50a030" stroke-width="2.200"/><path d="M19 6c2-1 2-3 3-5" fill="none" stroke="#000" stroke-width="1.300"/></svg>
<div class="b" style="left:1096px;top:689px;width:1px;height:23px;background:#a0a0a0;"></div><div class="b" style="left:1097px;top:689px;width:1px;height:23px;background:#fff;"></div>
<svg class="b" style="left:1109px;top:691px;" width="20" height="19" viewBox="0 0 20 19"><path d="M1 1h18v17h-16l-2-2z" fill="#a0a0a0" stroke="#808080"/><rect x="4" y="1.500" width="12" height="8" fill="#e6e6e6"/><rect x="5" y="12" width="10" height="6" fill="#7a7a7a"/><rect x="7" y="13" width="3" height="4" fill="#d8d8d8"/></svg>
<div class="b" style="left:1136px;top:689px;width:1px;height:23px;background:#a0a0a0;"></div><div class="b" style="left:1137px;top:689px;width:1px;height:23px;background:#fff;"></div>
<svg class="b" style="left:1147px;top:690px;" width="23" height="20" viewBox="0 0 23 20"><path d="M6 7l2-6h9l2 6" fill="#eee" stroke="#8a8a8a" stroke-width="1.300"/><rect x="1" y="7" width="21" height="8" rx="1.500" fill="#c0c0c0" stroke="#8a8a8a" stroke-width="1.300"/><path d="M5 13h13l1.500 6h-16z" fill="#f2f2f2" stroke="#8a8a8a" stroke-width="1.300"/><path d="M8 3h8M7.500 5h9" stroke="#8a8a8a"/></svg>
<div class="b" style="left:1176px;top:689px;width:1px;height:23px;background:#a0a0a0;"></div><div class="b" style="left:1177px;top:689px;width:1px;height:23px;background:#fff;"></div>
<span class="t" style="left:1211.5px;top:683.5px;font-size:16px;font-weight:bold;color:#000;transform:scaleX(1.1799);">»</span>
<div class="b" style="left:1228px;top:685px;width:1px;height:30px;background:#d0d0d0;"></div>
<div class="b" style="left:1229px;top:685px;width:1px;height:30px;background:#fff;"></div>
<div class="b" style="left:1234px;top:688px;width:3px;height:24px;background:repeating-linear-gradient(180deg,#c4c4c4 0 2px,transparent 2px 4px);opacity:.9;"></div>
<div class="b" style="left:1241px;top:689px;width:188px;height:23px;background:#fff;border:1px solid #8e8e8e;border-radius:4px;"></div>
<div class="b" style="left:1410px;top:690px;width:1px;height:21px;background:#b0b0b0;"></div>
<span class="t" style="left:1254.5px;top:690.9px;font-size:15.5px;color:#000;transform:scaleX(0.9439);">&lt;Skript auswählen&gt;</span>
<svg class="b" style="left:1415px;top:699px;" width="8" height="5" viewBox="0 0 8 5"><path d="M0 0h8l-4.0 5z" fill="#000"/></svg>
<div class="b" style="left:1433px;top:689px;width:1px;height:23px;background:#a0a0a0;"></div><div class="b" style="left:1434px;top:689px;width:1px;height:23px;background:#fff;"></div>
<svg class="b" style="left:1447px;top:693px;" width="14" height="14" viewBox="0 0 14 14"><path d="M0.500 0.500l13 6.500l-13 6.500z" fill="#000090"/></svg>
<svg class="b" style="left:1473px;top:689px;" width="22" height="22" viewBox="0 0 22 22"><path d="M5 2h14c2 0 2 3 0 3h-1v13c0 2-2 3-4 3h-11c-2 0-2-3 0-3h2z" fill="#fff" stroke="#000" stroke-width="1.400"/><path d="M8 6l9 1l-2 8l-8 2z" fill="#7a7ad8" opacity=".800"/><path d="M9 15l7-9" stroke="#2a2a90" stroke-width="1.300"/></svg>
<div class="b" style="left:1499px;top:685px;width:30px;height:29px;background:#cce4f7;border:1px solid #99c9ef;"></div>
<svg class="b" style="left:1506px;top:691px;" width="17" height="18" viewBox="0 0 17 18"><rect x="1" y="1" width="15" height="16" fill="#fff" stroke="#000" stroke-width="1.600"/><path d="M1 6h15M1 11.500h15" stroke="#000" stroke-width="1.500"/><path d="M4 9h2M4 14.500h2" stroke="#000" stroke-width="1.500"/><path d="M8 9h6M8 14.500h6" stroke="#999" stroke-width="1"/></svg>
<div class="b" style="left:1531px;top:689px;width:1px;height:23px;background:#a0a0a0;"></div><div class="b" style="left:1532px;top:689px;width:1px;height:23px;background:#fff;"></div>
<svg class="b" style="left:1543px;top:689px;" width="21" height="22" viewBox="0 0 21 22"><path d="M1 12h5l2 2h9v7h-16z" fill="#b8b020" stroke="#000" stroke-width="1.200"/><path d="M1 21l4-5h15l-4 5z" fill="#d8d030" stroke="#000" stroke-width="1.200"/><path d="M8 1l12 6l-12 6z" fill="#000090"/><rect x="8" y="1" width="1.500" height="14" fill="#000090"/></svg>
<svg class="b" style="left:1575px;top:691px;" width="18" height="18" viewBox="0 0 18 18"><circle cx="9" cy="9" r="8.500" fill="#c6c6c6"/><path d="M5.500 5.500l7 7M12.500 5.500l-7 7" stroke="#f0f0f0" stroke-width="2.400"/></svg>
<div class="b" style="left:1602px;top:689px;width:1px;height:23px;background:#a0a0a0;"></div><div class="b" style="left:1603px;top:689px;width:1px;height:23px;background:#fff;"></div>
<svg class="b" style="left:1615px;top:692px;" width="17" height="17" viewBox="0 0 17 17"><circle cx="8.500" cy="8.500" r="6.300" fill="none" stroke="#000090" stroke-width="3.200"/></svg>
<div class="b" style="left:1649px;top:693px;width:3.5px;height:14px;background:#b8b8b8;"></div>
<div class="b" style="left:1655.5px;top:693px;width:3.5px;height:14px;background:#b8b8b8;"></div>
<svg class="b" style="left:1677px;top:693px;" width="14" height="14" viewBox="0 0 14 14"><path d="M1 1l12 12M13 1l-12 12" stroke="#b0b0b0" stroke-width="2.400"/></svg>
<svg class="b" style="left:1707px;top:693px;" width="14" height="14" viewBox="0 0 14 14"><rect x="0.500" y="0.500" width="13" height="13" fill="#bcbcbc" stroke="#a8a8a8"/><rect x="3" y="1" width="8" height="5" fill="#e8e8e8"/><rect x="4" y="8.500" width="6" height="5" fill="#9a9a9a"/></svg>
<div class="b" style="left:1729px;top:685px;width:1px;height:30px;background:#d0d0d0;"></div>
<div class="b" style="left:1730px;top:685px;width:1px;height:30px;background:#fff;"></div>
<div class="b" style="left:1736px;top:688px;width:3px;height:24px;background:repeating-linear-gradient(180deg,#c4c4c4 0 2px,transparent 2px 4px);opacity:.9;"></div>
<span class="t" style="left:1755.0px;top:691.4px;font-size:15.5px;color:#000;transform:scaleX(0.9765);">Fo<u>t</u>okorrektur</span>
<svg class="b" style="left:1851px;top:696px;" width="7" height="5" viewBox="0 0 7 5"><path d="M0 0h7l-3.5 5z" fill="#000"/></svg>
<div class="b" style="left:1870px;top:689px;width:1px;height:23px;background:#a0a0a0;"></div><div class="b" style="left:1871px;top:689px;width:1px;height:23px;background:#fff;"></div>
<span class="t" style="left:1901.5px;top:683.5px;font-size:16px;font-weight:bold;color:#000;transform:scaleX(1.2361);">»</span>
<div class="b" style="left:960px;top:717px;width:960px;height:62px;background:#f0f0f0;border-top:1px solid #fff;"></div>
<div class="b" style="left:965px;top:719px;width:20px;height:58px;background:#e2e2e2;"></div>
<svg class="b" style="left:966px;top:722px;" width="12" height="12" viewBox="0 0 12 12"><path d="M1.500 1.500l8 8M9.500 1.500l-8 8" stroke="#000" stroke-width="2.400"/></svg>
<svg class="b" style="left:967px;top:742px;" width="10" height="13" viewBox="0 0 10 13"><path d="M2.500 1h5M3 1v5.500M7 1v5.500M1 7h8M5 7v5.500" stroke="#000" stroke-width="1.600" fill="none"/></svg>
<div class="b" style="left:991px;top:722px;width:3px;height:40px;background:repeating-linear-gradient(180deg,#c4c4c4 0 2px,transparent 2px 4px);opacity:.9;"></div>
<div class="b" style="left:1106px;top:722px;width:3px;height:40px;background:repeating-linear-gradient(180deg,#c4c4c4 0 2px,transparent 2px 4px);opacity:.9;"></div>
<span class="t" style="left:1001.0px;top:720.1px;font-size:12px;color:#a4a4a4;transform:scaleX(0.9558);">Voreinstellungen:</span>
<span class="t" style="left:1115.5px;top:720.1px;font-size:12px;color:#a4a4a4;transform:scaleX(1.0132);">Zoom ( % ):</span>
<span class="t" style="left:1201.5px;top:720.1px;font-size:12px;color:#a4a4a4;transform:scaleX(0.9630);">Ein-/Auszoomen:</span>
<span class="t" style="left:1313.0px;top:720.1px;font-size:12px;color:#a4a4a4;transform:scaleX(0.9655);">Stärker zoomen:</span>
<span class="t" style="left:1413.5px;top:720.1px;font-size:12px;color:#a4a4a4;transform:scaleX(0.9418);">Tatsächliche Größe:</span>
<svg class="b" style="left:1006px;top:737px;" width="17" height="21" viewBox="0 0 17 21"><path d="M5 10v-6.500a1.200 1.200 0 0 1 2.400 0v5M7.400 8v-6a1.200 1.200 0 0 1 2.400 0v6M9.800 8v-5.300a1.200 1.200 0 0 1 2.400 0v5.800M12.200 8.500v-3.500a1.200 1.200 0 0 1 2.400 0v7c0 3-1.500 4-2 7h-6c-.500-2.500-3-5-4.500-7.500c-.800-1.400.800-2.400 2-1l1.300 1.800" fill="#fff" stroke="#8a8a8a" stroke-width="1.100" stroke-linejoin="round"/></svg>
<svg class="b" style="left:1030px;top:746px;" width="7" height="5" viewBox="0 0 7 5"><path d="M0 0h7l-3.5 5z" fill="#b0b0b0"/></svg>
<div class="b" style="left:1116px;top:734px;width:68px;height:29px;background:#fff;border:1px solid #b8c4d0;"></div>
<span class="t" style="left:1121.0px;top:739.4px;font-size:12.5px;color:#8a8a8a;transform:scaleX(0.9350);">12</span>
<div class="b" style="left:1117px;top:756px;width:19px;height:5px;background:#2f8fe8;"></div>
<svg class="b" style="left:1156px;top:738px;" width="9" height="18" viewBox="0 0 9 18"><path d="M1.500 5l3-3.500l3 3.500zM1.500 12l3 3.500l3-3.500z" fill="#666"/></svg>
<div class="b" style="left:1169px;top:736px;width:13px;height:20px;background:#d6d6d6;"></div>
<svg class="b" style="left:1170px;top:744px;" width="11" height="7" viewBox="0 0 11 7"><path d="M1 1l4.500 4.500l4.500-4.500" fill="none" stroke="#b8b8b8" stroke-width="1.500"/></svg>
<div class="b" style="left:1193px;top:722px;width:1px;height:40px;background:#a0a0a0;"></div><div class="b" style="left:1194px;top:722px;width:1px;height:40px;background:#fff;"></div>
<div class="b" style="left:1301px;top:722px;width:1px;height:40px;background:#a0a0a0;"></div><div class="b" style="left:1302px;top:722px;width:1px;height:40px;background:#fff;"></div>
<div class="b" style="left:1405px;top:722px;width:1px;height:40px;background:#a0a0a0;"></div><div class="b" style="left:1406px;top:722px;width:1px;height:40px;background:#fff;"></div>
<div class="b" style="left:1529px;top:722px;width:1px;height:40px;background:#a0a0a0;"></div><div class="b" style="left:1530px;top:722px;width:1px;height:40px;background:#fff;"></div>
<svg class="b" style="left:1209px;top:741px;" width="16" height="16" viewBox="0 0 16 16"><circle cx="6.500" cy="6.500" r="5.300" fill="#f8f8f8" stroke="#7a7a7a" stroke-width="1.400"/><path d="M10.500 10.500l4 4.500" stroke="#7a7a7a" stroke-width="2.200"/><path d="M4 6.500h5" stroke="#7a7a7a" stroke-width="1.500"/></svg>
<svg class="b" style="left:1242px;top:741px;" width="16" height="16" viewBox="0 0 16 16"><circle cx="6.500" cy="6.500" r="5.300" fill="#f8f8f8" stroke="#7a7a7a" stroke-width="1.400"/><path d="M10.500 10.500l4 4.500" stroke="#7a7a7a" stroke-width="2.200"/><path d="M4 6.500h5" stroke="#7a7a7a" stroke-width="1.500"/><path d="M6.500 4v5" stroke="#7a7a7a" stroke-width="1.500"/></svg>
<svg class="b" style="left:1316px;top:738px;" width="20" height="20" viewBox="0 0 20 20"><circle cx="11" cy="6.500" r="5.300" fill="#f0f0f0" stroke="#7a7a7a" stroke-width="1.200"/><circle cx="9" cy="8" r="5.300" fill="#f0f0f0" stroke="#7a7a7a" stroke-width="1.200"/><circle cx="7" cy="9.500" r="5.300" fill="#f8f8f8" stroke="#7a7a7a" stroke-width="1.400"/><path d="M11 13.500l4 4.500M14 11l4 4" stroke="#7a7a7a" stroke-width="2"/><path d="M4.500 9.500h5" stroke="#7a7a7a" stroke-width="1.500"/></svg>
<svg class="b" style="left:1350px;top:738px;" width="20" height="20" viewBox="0 0 20 20"><circle cx="11" cy="6.500" r="5.300" fill="#f0f0f0" stroke="#7a7a7a" stroke-width="1.200"/><circle cx="9" cy="8" r="5.300" fill="#f0f0f0" stroke="#7a7a7a" stroke-width="1.200"/><circle cx="7" cy="9.500" r="5.300" fill="#f8f8f8" stroke="#7a7a7a" stroke-width="1.400"/><path d="M11 13.500l4 4.500M14 11l4 4" stroke="#7a7a7a" stroke-width="2"/><path d="M4.500 9.500h5" stroke="#7a7a7a" stroke-width="1.500"/><path d="M7 7v5" stroke="#7a7a7a" stroke-width="1.500"/></svg>
<svg class="b" style="left:1418px;top:738px;" width="21" height="21" viewBox="0 0 21 21"><circle cx="12" cy="7" r="5.500" fill="#f4f4f4" stroke="#8a8a8a" stroke-width="1.300"/><circle cx="7" cy="12" r="5.500" fill="#f4f4f4" stroke="#8a8a8a" stroke-width="1.300"/><path d="M3 16l8-8M16 10l4 4" stroke="#8a8a8a" stroke-width="1.600"/></svg>
<svg class="b" style="left:1544px;top:738px;" width="20" height="20" viewBox="0 0 20 20"><rect x="1" y="1" width="18" height="18" fill="#fafafa" stroke="#8a8a8a" stroke-width="1.500"/><rect x="1" y="10" width="9" height="9" fill="#fff" stroke="#8a8a8a" stroke-width="1.500"/><path d="M17 3l-5 5M12 4v4h4" fill="none" stroke="#8a8a8a" stroke-width="1.500"/></svg>
<svg class="b" style="left:1577px;top:738px;" width="20" height="20" viewBox="0 0 20 20"><rect x="1" y="1" width="18" height="18" fill="#fafafa" stroke="#8a8a8a" stroke-width="1.500"/><rect x="1" y="10" width="9" height="9" fill="#fff" stroke="#8a8a8a" stroke-width="1.500"/><path d="M11 9l6-6M13 3h4v4" fill="none" stroke="#8a8a8a" stroke-width="1.500"/></svg>
<svg class="b" style="left:1609px;top:738px;" width="20" height="20" viewBox="0 0 20 20"><rect x="1" y="1" width="18" height="18" fill="#fafafa" stroke="#8a8a8a" stroke-width="1.500"/><rect x="3.500" y="5" width="13" height="11" fill="#fff" stroke="#8a8a8a" stroke-width="1.500"/></svg>
<div class="b" style="left:960px;top:779px;width:960px;height:5px;background:#f4f4f4;"></div>
<div class="b" style="left:1005px;top:783px;width:682px;height:244px;background:#ababab;border-top:2px solid #7c7c7c;border-left:2px solid #7c7c7c;"></div>
<div class="b" style="left:962px;top:784px;width:42px;height:193px;background:#f0f0f0;border-right:1px solid #dadada;border-bottom:1px solid #d0d0d0;"></div>
<div class="b" style="left:968px;top:787px;width:30px;height:3px;background:repeating-linear-gradient(90deg,#c8c8c8 0 2px,transparent 2px 5px);"></div>
<svg class="b" style="left:968px;top:800px;" width="17" height="21" viewBox="0 0 17 21"><path d="M5 10v-6.500a1.200 1.200 0 0 1 2.400 0v5M7.400 8v-6a1.200 1.200 0 0 1 2.400 0v6M9.800 8v-5.300a1.200 1.200 0 0 1 2.400 0v5.800M12.200 8.500v-3.500a1.200 1.200 0 0 1 2.400 0v7c0 3-1.500 4-2 7h-6c-.500-2.500-3-5-4.500-7.500c-.800-1.400.800-2.400 2-1l1.300 1.800" fill="#fff" stroke="#8a8a8a" stroke-width="1.100" stroke-linejoin="round"/></svg>
<svg class="b" style="left:992px;top:807px;" width="7" height="5" viewBox="0 0 7 5"><path d="M0 0h7l-3.5 5z" fill="#b0b0b0"/></svg>
<svg class="b" style="left:968px;top:831px;" width="19" height="19" viewBox="0 0 19 19"><rect x="1.500" y="1.500" width="16" height="16" fill="none" stroke="#8a8a8a" stroke-width="1.600" stroke-dasharray="2.500 2.500"/><path d="M9.500 5v9" stroke="#8a8a8a" stroke-width="1.600" stroke-dasharray="2 3"/></svg>
<svg class="b" style="left:992px;top:838px;" width="7" height="5" viewBox="0 0 7 5"><path d="M0 0h7l-3.5 5z" fill="#b0b0b0"/></svg>
<svg class="b" style="left:969px;top:861px;" width="17" height="18" viewBox="0 0 17 18"><path d="M4 0.500v13.500h12.500M0.500 4h12.500v13.500" fill="none" stroke="#8a8a8a" stroke-width="1.500"/><path d="M4 14l11-13" stroke="#8a8a8a" stroke-width="1"/></svg>
<svg class="b" style="left:967px;top:890px;" width="20" height="20" viewBox="0 0 20 20"><path d="M10 2v16M2 10h16" stroke="#8a8a8a" stroke-width="1.600"/><path d="M10 0l3 4h-6zM10 20l3-4h-6zM0 10l4-3v6zM20 10l-4-3v6z" fill="#8a8a8a"/></svg>
<svg class="b" style="left:967px;top:923px;" width="20" height="15" viewBox="0 0 20 15"><rect x="1.500" y="1.500" width="17" height="12" fill="none" stroke="#8a8a8a" stroke-width="1.600" stroke-dasharray="3 2"/></svg>
<svg class="b" style="left:992px;top:928px;" width="7" height="5" viewBox="0 0 7 5"><path d="M0 0h7l-3.5 5z" fill="#b0b0b0"/></svg>
<svg class="b" style="left:993px;top:963px;" width="8" height="12" viewBox="0 0 8 12"><path d="M0.500 0.500l3.500 3.500l3.500-3.500M0.500 6l3.500 3.500l3.500-3.500" fill="none" stroke="#000" stroke-width="2"/></svg>
<div class="b" style="left:962px;top:979px;width:33px;height:49px;background:#f0f0f0;border-right:1px solid #d0d0d0;border-bottom:1px solid #d0d0d0;"></div>
<div class="b" style="left:968px;top:983px;width:18px;height:3px;background:repeating-linear-gradient(90deg,#c8c8c8 0 2px,transparent 2px 5px);"></div>
<svg class="b" style="left:983px;top:1013px;" width="8" height="12" viewBox="0 0 8 12"><path d="M0.500 0.500l3.500 3.500l3.500-3.500M0.500 6l3.500 3.500l3.500-3.500" fill="none" stroke="#000" stroke-width="2"/></svg>
<div class="b" style="left:1693px;top:784px;width:227px;height:21px;background:#dcdcdc;"></div>
<span class="t" style="left:1699.5px;top:786.3px;font-size:15.5px;color:#101010;transform:scaleX(0.9563);">Materialien</span>
<svg class="b" style="left:1841px;top:788px;" width="11" height="14" viewBox="0 0 11 14"><path d="M2.500 1h6M3.500 1v6M7.500 1v6M1 7.500h9M5.500 7.500v6" stroke="#000" stroke-width="1.700" fill="none"/></svg>
<div class="b" style="left:1862px;top:798px;width:8px;height:2px;background:#b4b4b4;"></div>
<div class="b" style="left:1882px;top:788px;width:13px;height:12px;border:1px solid #b4b4b4;border-top:3px solid #b4b4b4;"></div>
<svg class="b" style="left:1904px;top:789px;" width="12" height="12" viewBox="0 0 12 12"><path d="M1.500 1.500l9 9M10.500 1.500l-9 9" stroke="#000" stroke-width="2.600"/></svg>
<div class="b" style="left:1698px;top:812px;width:28px;height:30px;background:#f8f8f8;border:1px solid #d0d0d0;border-bottom:none;border-radius:3px 3px 0 0;"></div>
<div class="b" style="left:1728px;top:814px;width:27px;height:26px;background:#e8e8e8;border:1px solid #d0d0d0;border-bottom:none;border-radius:3px 3px 0 0;"></div>
<div class="b" style="left:1757px;top:814px;width:27px;height:26px;background:#e8e8e8;border:1px solid #d0d0d0;border-bottom:none;border-radius:3px 3px 0 0;"></div>
<div class="b" style="left:1705px;top:819px;width:14px;height:14px;background:conic-gradient(from 0deg,#f00,#f0f,#00f,#0ff,#0f0,#ff0,#f00);padding:2px;"><div style="width:10px;height:10px;background:linear-gradient(180deg,#000,#c33)"></div></div>
<div class="b" style="left:1733px;top:819px;width:16px;height:14px;background:linear-gradient(180deg,#000 0%,transparent 50%,#fff 100%),linear-gradient(90deg,#f00,#ff0,#0f0,#0ff,#00f,#f0f);"></div>
<div class="b" style="left:1760.0px;top:818.5px;width:2.5px;height:2.5px;background:#e02020;"></div>
<div class="b" style="left:1764.2px;top:818.5px;width:2.5px;height:2.5px;background:#20a020;"></div>
<div class="b" style="left:1768.4px;top:818.5px;width:2.5px;height:2.5px;background:#20c0c0;"></div>
<div class="b" style="left:1772.6px;top:818.5px;width:2.5px;height:2.5px;background:#e02020;"></div>
<div class="b" style="left:1776.8px;top:818.5px;width:2.5px;height:2.5px;background:#20a020;"></div>
<div class="b" style="left:1760.0px;top:822.7px;width:2.5px;height:2.5px;background:#e02020;"></div>
<div class="b" style="left:1764.2px;top:822.7px;width:2.5px;height:2.5px;background:#20a020;"></div>
<div class="b" style="left:1768.4px;top:822.7px;width:2.5px;height:2.5px;background:#20c0c0;"></div>
<div class="b" style="left:1772.6px;top:822.7px;width:2.5px;height:2.5px;background:#e02020;"></div>
<div class="b" style="left:1776.8px;top:822.7px;width:2.5px;height:2.5px;background:#20a020;"></div>
<div class="b" style="left:1760.0px;top:826.9px;width:2.5px;height:2.5px;background:#e02020;"></div>
<div class="b" style="left:1764.2px;top:826.9px;width:2.5px;height:2.5px;background:#20a020;"></div>
<div class="b" style="left:1768.4px;top:826.9px;width:2.5px;height:2.5px;background:#20c0c0;"></div>
<div class="b" style="left:1772.6px;top:826.9px;width:2.5px;height:2.5px;background:#e02020;"></div>
<div class="b" style="left:1776.8px;top:826.9px;width:2.5px;height:2.5px;background:#20a020;"></div>
<div class="b" style="left:1760.0px;top:831.1px;width:2.5px;height:2.5px;background:#e02020;"></div>
<div class="b" style="left:1764.2px;top:831.1px;width:2.5px;height:2.5px;background:#20a020;"></div>
<div class="b" style="left:1768.4px;top:831.1px;width:2.5px;height:2.5px;background:#20c0c0;"></div>
<div class="b" style="left:1772.6px;top:831.1px;width:2.5px;height:2.5px;background:#e02020;"></div>
<div class="b" style="left:1776.8px;top:831.1px;width:2.5px;height:2.5px;background:#20a020;"></div>
<div class="b" style="left:1694.5px;top:840px;width:110.5px;height:148px;background:#fff;border:1px solid #b0b0b0;"></div>
<div class="b" style="left:1699px;top:845px;width:100px;height:128px;background:conic-gradient(from 0deg at 50% 50%,#f00 0deg,#f0a 25deg,#f0f 42deg,#80f 90deg,#00f 135deg,#0af 160deg,#0ff 180deg,#0f8 200deg,#0f0 225deg,#8f0 250deg,#ff0 285deg,#fa0 322deg,#f40 345deg,#f00 360deg);"></div>
<div class="b" style="left:1712px;top:858px;width:75px;height:102px;background:linear-gradient(180deg,#000 0%,rgba(0,0,0,0) 50%,rgba(255,255,255,0) 50%,#fff 100%),linear-gradient(90deg,#808080,#00ff00);"></div>
<div class="b" style="left:1699.0px;top:974px;width:21.5px;height:9.5px;background:#000;"></div>
<div class="b" style="left:1720.3px;top:974px;width:21.5px;height:9.5px;background:#484848;"></div>
<div class="b" style="left:1741.6px;top:974px;width:21.5px;height:9.5px;background:#8a8a8a;"></div>
<div class="b" style="left:1762.9px;top:974px;width:21.5px;height:9.5px;background:#bcbcbc;"></div>
<svg class="b" style="left:1781px;top:890px;" width="15" height="13" viewBox="0 0 15 13"><path d="M14 1v11l-6-5.500z" fill="#40c040"/><circle cx="5" cy="6.500" r="2.800" fill="none" stroke="#d040d0" stroke-width="1.800"/></svg>
<svg class="b" style="left:1780px;top:961px;" width="13" height="8" viewBox="0 0 13 8"><path d="M6.500 0.500l6 7.500h-12z" fill="#f0a020"/></svg>
<div class="b" style="left:1849.5px;top:879px;width:70px;height:70px;background:#f0f0f0;border-left:1px solid #b4b4b4;border-top:1px solid #b4b4b4;"></div>
<div class="b" style="left:1810.5px;top:824px;width:69px;height:49px;background:#00c000;border:1px solid #8a8a8a;"></div>
<div class="b" style="left:1810.5px;top:873px;width:23px;height:22px;background:#f0f0f0;border:1px solid #d4d4d4;border-right-color:#a8a8a8;border-bottom-color:#a8a8a8;"></div>
<div class="b" style="left:1833.5px;top:873px;width:23px;height:22px;background:#f0f0f0;border:1px solid #d4d4d4;border-right-color:#a8a8a8;border-bottom-color:#a8a8a8;"></div>
<div class="b" style="left:1856.5px;top:873px;width:23px;height:22px;background:#f0f0f0;border:1px solid #d4d4d4;border-right-color:#a8a8a8;border-bottom-color:#a8a8a8;"></div>
<svg class="b" style="left:1815px;top:877px;" width="18" height="16" viewBox="0 0 18 16"><circle cx="7" cy="7" r="6.300" fill="#000"/><path d="M17 15v-3.500l-3.500 3.500z" fill="#000"/></svg>
<svg class="b" style="left:1838px;top:877px;" width="14" height="14" viewBox="0 0 14 14"><circle cx="7" cy="7" r="5.800" fill="none" stroke="#333" stroke-width="1.300" stroke-dasharray="2 1.500"/><circle cx="7" cy="7" r="2.800" fill="none" stroke="#555" stroke-width="1" stroke-dasharray="1.500 1.500"/></svg>
<svg class="b" style="left:1861px;top:877px;" width="14" height="14" viewBox="0 0 14 14"><circle cx="7" cy="7" r="5.500" fill="none" stroke="#d0d0d0" stroke-width="1.300" stroke-dasharray="5 3"/></svg>
<div class="b" style="left:1886px;top:829.5px;width:19.5px;height:21px;background:#00c000;"></div>
<div class="b" style="left:1898.5px;top:847px;width:21px;height:20.5px;background:#cfe3f5;border-top:1px solid #bcc8d4;border-left:1px solid #bcc8d4;"></div>
<svg class="b" style="left:1884px;top:855px;" width="12" height="12" viewBox="0 0 12 12"><path d="M2 3l7 7M2 3v3.500M2 3h3.500M9 10v-3.500M9 10h-3.500" stroke="#000" stroke-width="1.600" fill="none"/></svg>
<svg class="b" style="left:1867px;top:888px;" width="34" height="34" viewBox="0 0 34 34"><circle cx="17" cy="17" r="13.500" fill="none" stroke="#cfcfcf" stroke-width="4.500"/><path d="M7.500 7.500l19 19" stroke="#cfcfcf" stroke-width="4.500"/></svg>
<div class="b" style="left:1850.5px;top:928px;width:23px;height:21px;background:#f0f0f0;border:1px solid #d4d4d4;border-right-color:#a8a8a8;border-bottom-color:#a8a8a8;"></div>
<div class="b" style="left:1873.5px;top:928px;width:22px;height:21px;background:#f0f0f0;border:1px solid #d4d4d4;border-right-color:#a8a8a8;border-bottom-color:#a8a8a8;"></div>
<div class="b" style="left:1895.5px;top:928px;width:23px;height:21px;background:#fbfbfb;border:1px solid #d4d4d4;border-right-color:#a8a8a8;border-bottom-color:#a8a8a8;"></div>
<svg class="b" style="left:1854px;top:931px;" width="18" height="16" viewBox="0 0 18 16"><circle cx="7" cy="7" r="6.300" fill="#000"/><path d="M17 15v-3.500l-3.500 3.500z" fill="#000"/></svg>
<svg class="b" style="left:1877px;top:931px;" width="14" height="14" viewBox="0 0 14 14"><circle cx="7" cy="7" r="5.800" fill="none" stroke="#333" stroke-width="1.300" stroke-dasharray="2 1.500"/><circle cx="7" cy="7" r="2.800" fill="none" stroke="#555" stroke-width="1" stroke-dasharray="1.500 1.500"/></svg>
<svg class="b" style="left:1900px;top:932px;" width="14" height="14" viewBox="0 0 14 14"><circle cx="7" cy="7" r="5.300" fill="none" stroke="#111" stroke-width="1.600"/><path d="M3.300 3.300l7.400 7.400" stroke="#111" stroke-width="1.600"/></svg>
<svg class="b" style="left:1826px;top:904px;" width="16" height="16" viewBox="0 0 16 16"><path d="M3.500 13v-9.500M3.500 3l-2.800 3M3.500 3l2.800 3M3.500 9l9 3.500M13 12.500l-3.500-3M13 12.500l-4 1.500" stroke="#000" stroke-width="1.700" fill="none"/></svg>
<div class="b" style="left:1810.5px;top:957px;width:16px;height:16px;background:#fcfcfc;border:1px solid #c8c8c8;"></div>
<svg class="b" style="left:1812px;top:959px;" width="13" height="12" viewBox="0 0 13 12"><path d="M1.500 6l3.500 4l6.500-9" fill="none" stroke="#b4b4b4" stroke-width="1.600"/></svg>
<span class="t" style="left:1830.0px;top:957.2px;font-size:12.5px;color:#9c9c9c;transform:scaleX(0.9048);">Alle Werkzeuge</span>
</div>
</div>
<div id="gap" style="position:absolute;left:959px;top:0;width:2px;height:32px;background:#2f6a72"></div>
<!-- ================= SPEEDCOMMANDER THUMB ================= -->
<div id="sc">
<svg class="b" style="left:190.5px;top:632px;" width="27.5" height="27.5" viewBox="0 0 28 28"><defs><radialGradient id="sg275" cx="40%" cy="35%" r="70%"><stop offset="0" stop-color="#fff"/><stop offset=".6" stop-color="#dfe6ee"/><stop offset="1" stop-color="#8c9cb0"/></radialGradient></defs><circle cx="14" cy="14" r="13.500" fill="url(#sg275)"/><path d="M22 8.500c-2-3-6-4-10-3.500s-6.500 3-6 5.500s3 3.500 8 4s6 1 6 2.500s-3 2.500-6 2.500s-6-1-8-3" fill="none" stroke="#2a4a8a" stroke-width="5.200" stroke-linecap="round"/><path d="M22 8.500c-2-3-6-4-10-3.500s-6.500 3-6 5.500s3 3.500 8 4s6 1 6 2.500s-3 2.500-6 2.500s-6-1-8-3" fill="none" stroke="#f2d21c" stroke-width="3.200" stroke-linecap="round"/></svg>
<span class="t" style="left:226.0px;top:638.8px;font-size:16px;color:#fff;transform:scaleX(0.9285);">SpeedCommander 14 - tiad</span>
<div class="b" style="left:190px;top:666px;width:579px;height:348px;background:#bdd8f8;overflow:hidden"><div class="abs0" style="left:-190px;top:-666px">
<div class="b" style="left:190px;top:666px;width:579px;height:15px;background:#fff;"></div>
<svg class="b" style="left:194px;top:669px;" width="8" height="8" viewBox="0 0 28 28"><defs><radialGradient id="sg80" cx="40%" cy="35%" r="70%"><stop offset="0" stop-color="#fff"/><stop offset=".6" stop-color="#dfe6ee"/><stop offset="1" stop-color="#8c9cb0"/></radialGradient></defs><circle cx="14" cy="14" r="13.500" fill="url(#sg80)"/><path d="M22 8.500c-2-3-6-4-10-3.500s-6.500 3-6 5.500s3 3.500 8 4s6 1 6 2.500s-3 2.500-6 2.500s-6-1-8-3" fill="none" stroke="#2a4a8a" stroke-width="5.200" stroke-linecap="round"/><path d="M22 8.500c-2-3-6-4-10-3.500s-6.500 3-6 5.500s3 3.500 8 4s6 1 6 2.500s-3 2.500-6 2.500s-6-1-8-3" fill="none" stroke="#f2d21c" stroke-width="3.200" stroke-linecap="round"/></svg>
<span class="t" style="left:203.0px;top:672.3px;font-size:5.5px;color:#c0c0c0;transform:scaleX(1.0064);">SpeedCommander 14 - tiad</span>
<span class="t" style="left:762.5px;top:670.7px;font-size:8px;color:#888;">×</span>
<div class="b" style="left:190px;top:681px;width:579px;height:11px;background:#c3dcf8;"></div>
<span class="t" style="left:198.0px;top:683.3px;font-size:5.6px;font-weight:bold;color:#222;transform:scaleX(0.9493);">Datei</span>
<span class="t" style="left:217.0px;top:683.3px;font-size:5.6px;font-weight:bold;color:#222;transform:scaleX(0.8983);">Bearbeiten</span>
<span class="t" style="left:250.0px;top:683.3px;font-size:5.6px;font-weight:bold;color:#222;transform:scaleX(0.9105);">Ordner</span>
<span class="t" style="left:273.0px;top:683.3px;font-size:5.6px;font-weight:bold;color:#222;transform:scaleX(0.9226);">Datenträger</span>
<span class="t" style="left:308.0px;top:683.3px;font-size:5.6px;font-weight:bold;color:#222;transform:scaleX(0.8765);">Ansicht</span>
<span class="t" style="left:332.5px;top:683.3px;font-size:5.6px;font-weight:bold;color:#222;transform:scaleX(0.7884);">Extras</span>
<span class="t" style="left:353.0px;top:683.3px;font-size:5.6px;font-weight:bold;color:#222;transform:scaleX(0.9064);">Hilfe</span>
<div class="b" style="left:192px;top:692px;width:401px;height:14.5px;background:#dbe8fa;border-radius:2px;box-shadow:0 1px 0 #a9c4e8;"></div>
<div class="b" style="left:196.2px;top:694.5px;width:9px;height:9px;background:#dfe8f4;border-radius:1.500px;border:1px solid #5a88c8;opacity:.950;"></div>
<div class="b" style="left:210.5px;top:694.5px;width:9px;height:9px;background:#f4f0e0;border-radius:1.500px;border:1px solid #e8902a;opacity:.950;"></div>
<div class="b" style="left:224.5px;top:694.5px;width:9px;height:9px;background:#e4e8ee;border-radius:1.500px;border:1px solid #c4ccd8;opacity:.950;"></div>
<div class="b" style="left:238.5px;top:694.5px;width:9px;height:9px;background:#e4e8ee;border-radius:1.500px;border:1px solid #c4ccd8;opacity:.950;"></div>
<svg class="b" style="left:252.5px;top:694.5px;" width="9" height="9" viewBox="0 0 9 9"><path d="M1 1l7 7M8 1l-7 7" stroke="#e01818" stroke-width="2"/></svg>
<div class="b" style="left:269.5px;top:694.5px;width:9px;height:9px;background:#3a78d0;border-radius:1.500px;border:1px solid #2a58a8;opacity:.950;"></div>
<div class="b" style="left:283.5px;top:694.5px;width:9px;height:9px;background:#2a50b0;border-radius:1.500px;border:1px solid #1a3a90;opacity:.950;"></div>
<div class="b" style="left:298.5px;top:694.5px;width:9px;height:9px;background:#d8b870;border-radius:1.500px;border:1px solid #a88838;opacity:.950;"></div>
<div class="b" style="left:313.5px;top:694.5px;width:9px;height:9px;background:#e8f0fa;border-radius:1.500px;border:1px solid #5a88c8;opacity:.950;"></div>
<div class="b" style="left:327.0px;top:694.5px;width:9px;height:9px;background:#d8dce4;border-radius:1.500px;border:1px solid #b0b8c4;opacity:.950;"></div>
<div class="b" style="left:342.0px;top:694.5px;width:9px;height:9px;background:#d8dce4;border-radius:1.500px;border:1px solid #b0b8c4;opacity:.950;"></div>
<div class="b" style="left:358.0px;top:694.5px;width:9px;height:9px;background:#c8ccd4;border-radius:1.500px;border:1px solid #8a92a0;opacity:.950;"></div>
<div class="b" style="left:372.0px;top:694.5px;width:9px;height:9px;background:#e8f0fa;border-radius:1.500px;border:1px solid #4a78c0;opacity:.950;"></div>
<div class="b" style="left:386.2px;top:694.5px;width:9px;height:9px;background:#f0d050;border-radius:1.500px;border:1px solid #3a58a0;opacity:.950;"></div>
<div class="b" style="left:402.5px;top:694.5px;width:9.5px;height:9.5px;background:#38b038;border-radius:5px;border:1px solid #1a801a;"></div>
<div class="b" style="left:421.5px;top:694.5px;width:9.5px;height:9.5px;background:#d0d4dc;border-radius:5px;border:1px solid #a8b0bc;"></div>
<svg class="b" style="left:443.5px;top:693.5px;" width="11" height="11" viewBox="0 0 11 11"><path d="M5.500 .500l1.500 3.500l3.700.300l-2.800 2.400l.900 3.700l-3.300-2l-3.300 2l.900-3.700l-2.800-2.400l3.700-.300z" fill="#f8d020" stroke="#e0a800" stroke-width=".500"/></svg>
<div class="b" style="left:462.5px;top:694.5px;width:9px;height:9px;background:#c8d4e4;border-radius:1.500px;border:1px solid #9ab0cc;opacity:.950;"></div>
<div class="b" style="left:490.5px;top:694.5px;width:9px;height:9px;background:#f4d040;border-radius:1.500px;border:1px solid #d8a820;opacity:.950;"></div>
<div class="b" style="left:503.5px;top:694.5px;width:9px;height:9px;background:#dde2ea;border-radius:1.500px;border:1px solid #c0c8d4;opacity:.950;"></div>
<div class="b" style="left:518.5px;top:694.5px;width:9px;height:9px;background:#f0d058;border-radius:1.500px;border:1px solid #3a78d0;opacity:.950;"></div>
<div class="b" style="left:536.5px;top:694.5px;width:9px;height:9px;background:#3a80e0;border-radius:1.500px;border:1px solid #f0b030;opacity:.950;"></div>
<div class="b" style="left:556.0px;top:694.5px;width:9px;height:9px;background:#f0c860;border-radius:1.500px;border:1px solid #e03048;opacity:.950;"></div>
<div class="b" style="left:577.5px;top:694.5px;width:9.5px;height:9.5px;background:#f4d838;border-radius:5px;border:1px solid #c8a010;"></div>
<div class="b" style="left:475px;top:692.5px;width:13.5px;height:13.5px;background:#f8c868;border:0.500px solid #e09020;"></div>
<div class="b" style="left:477.5px;top:695px;width:9px;height:1.5px;background:#4a3000;"></div>
<div class="b" style="left:477.5px;top:698.5px;width:9px;height:1.5px;background:#4a3000;"></div>
<div class="b" style="left:477.5px;top:702px;width:9px;height:1.5px;background:#4a3000;"></div>
<div class="b" style="left:196px;top:713px;width:7px;height:5px;background:#555;opacity:.850;"></div>
<span class="t" style="left:206.0px;top:712.5px;font-size:6.5px;color:#333;">C</span>
<div class="b" style="left:214px;top:713px;width:7px;height:5px;background:#555;opacity:.850;"></div>
<span class="t" style="left:224.0px;top:712.5px;font-size:6.5px;color:#333;">D</span>
<div class="b" style="left:233px;top:713px;width:7px;height:5px;background:#555;opacity:.850;"></div>
<span class="t" style="left:243.0px;top:712.5px;font-size:6.5px;color:#333;">E</span>
<div class="b" style="left:251px;top:713px;width:7px;height:5px;background:#3a8a3a;opacity:.850;"></div>
<span class="t" style="left:261.0px;top:712.5px;font-size:6.5px;color:#333;">O</span>
<div class="b" style="left:268px;top:713px;width:7px;height:5px;background:#2a80e0;opacity:.850;"></div>
<span class="t" style="left:278.0px;top:712.5px;font-size:6.5px;color:#333;">0</span>
<div class="b" style="left:287px;top:713px;width:7px;height:5px;background:#3a90d0;opacity:.850;"></div>
<span class="t" style="left:297.0px;top:712.5px;font-size:6.5px;color:#333;">1</span>
<div class="b" style="left:305px;top:713px;width:7px;height:5px;background:#e0a020;opacity:.850;"></div>
<span class="t" style="left:315.0px;top:712.5px;font-size:6.5px;color:#333;">2</span>
<div class="b" style="left:323px;top:713px;width:7px;height:5px;background:#3a90d0;opacity:.850;"></div>
<span class="t" style="left:333.0px;top:712.5px;font-size:6.5px;color:#333;">3</span>
<div class="b" style="left:494px;top:713px;width:7px;height:5px;background:#555;opacity:.850;"></div>
<span class="t" style="left:504.0px;top:712.5px;font-size:6.5px;color:#333;">C</span>
<div class="b" style="left:512px;top:713px;width:7px;height:5px;background:#555;opacity:.850;"></div>
<span class="t" style="left:522.0px;top:712.5px;font-size:6.5px;color:#333;">D</span>
<div class="b" style="left:531px;top:713px;width:7px;height:5px;background:#555;opacity:.850;"></div>
<span class="t" style="left:541.0px;top:712.5px;font-size:6.5px;color:#333;">E</span>
<div class="b" style="left:549px;top:713px;width:7px;height:5px;background:#3a8a3a;opacity:.850;"></div>
<span class="t" style="left:559.0px;top:712.5px;font-size:6.5px;color:#333;">O</span>
<div class="b" style="left:566px;top:713px;width:7px;height:5px;background:#2a80e0;opacity:.850;"></div>
<span class="t" style="left:576.0px;top:712.5px;font-size:6.5px;color:#333;">0</span>
<div class="b" style="left:585px;top:713px;width:7px;height:5px;background:#3a90d0;opacity:.850;"></div>
<span class="t" style="left:595.0px;top:712.5px;font-size:6.5px;color:#333;">1</span>
<div class="b" style="left:603px;top:713px;width:7px;height:5px;background:#e0a020;opacity:.850;"></div>
<span class="t" style="left:613.0px;top:712.5px;font-size:6.5px;color:#333;">2</span>
<div class="b" style="left:621px;top:713px;width:7px;height:5px;background:#3a90d0;opacity:.850;"></div>
<span class="t" style="left:631.0px;top:712.5px;font-size:6.5px;color:#333;">3</span>
<div class="b" style="left:213px;top:708.5px;width:18px;height:11px;border:0.700px solid #3a80d8;border-radius:1px;"></div>
<div class="b" style="left:619px;top:708.5px;width:19px;height:11px;border:0.700px solid #3a80d8;border-radius:1px;"></div>
<div class="b" style="left:193px;top:724px;width:275px;height:7.5px;background:#a9cbf5;border-top:0.500px solid #88b0e8;"></div>
<span class="t" style="left:195.0px;top:725.5px;font-size:5.3px;color:#2a4a8a;transform:scaleX(1.0079);">Desktop ▸ Dieser PC ▸ DATA (D:) ▸ homepage ▸ tilp-1&amp;1 ▸ w81 ▸</span>
<span class="t" style="left:440.0px;top:725.8px;font-size:5px;color:#555;transform:scaleX(1.4179);">⟍ ‥ ⊟ ˄</span>
<div class="b" style="left:193px;top:731.5px;width:273px;height:225px;background:#fff;"></div>
<span class="t" style="left:196.0px;top:734.9px;font-size:6px;color:#222;transform:scaleX(0.9997);">Name</span>
<span class="t" style="left:379.0px;top:734.9px;font-size:6px;color:#222;transform:scaleX(1.0291);">Größe</span>
<span class="t" style="left:402.0px;top:734.9px;font-size:6px;color:#222;transform:scaleX(1.0393);">Geändert</span>
<div class="b" style="left:196px;top:744.8px;width:5.5px;height:7px;background:#f6d36e;border-radius:.500px;"></div>
<span class="t" style="left:203.0px;top:745.6px;font-size:6.2px;color:#222;transform:scaleX(0.9600);">..</span>
<span class="t" style="left:402.0px;top:745.6px;font-size:6.2px;color:#222;transform:scaleX(0.9702);">26.08.2015  16:36</span>
<div class="b" style="left:193px;top:754.3px;width:267px;height:11.1px;background:#fffce4;"></div>
<div class="b" style="left:196px;top:755.9px;width:5.5px;height:7px;background:#f6d36e;border-radius:.500px;"></div>
<span class="t" style="left:203.0px;top:756.7px;font-size:6.2px;color:#222;transform:scaleX(0.9600);">junction-pfad-Dateien</span>
<span class="t" style="left:402.0px;top:756.7px;font-size:6.2px;color:#222;transform:scaleX(0.9792);">03.11.2014  00:38</span>
<div class="b" style="left:196px;top:767.0px;width:5.5px;height:7px;background:#f6d36e;border-radius:.500px;"></div>
<span class="t" style="left:203.0px;top:767.8px;font-size:6.2px;color:#222;transform:scaleX(0.9600);">junction-name-Dateien</span>
<span class="t" style="left:402.0px;top:767.8px;font-size:6.2px;color:#222;transform:scaleX(0.9792);">03.11.2014  00:37</span>
<div class="b" style="left:193px;top:776.4999999999999px;width:267px;height:11.1px;background:#fffce4;"></div>
<div class="b" style="left:196px;top:778.0999999999999px;width:5.5px;height:7px;background:#f6d36e;border-radius:.500px;"></div>
<span class="t" style="left:203.0px;top:778.9px;font-size:6.2px;color:#222;transform:scaleX(0.9600);">files</span>
<span class="t" style="left:402.0px;top:778.9px;font-size:6.2px;color:#222;transform:scaleX(0.9792);">02.11.2014  17:44</span>
<div class="b" style="left:196.5px;top:789.1999999999999px;width:4.5px;height:6.5px;background:#e04030;border:1px solid #d8d8d8;"></div>
<span class="t" style="left:203.0px;top:790.0px;font-size:6.2px;color:#222;transform:scaleX(0.9600);">w10.htm</span>
<span class="t" style="left:378.3px;top:790.0px;font-size:6.2px;color:#222;transform:scaleX(0.9600);">42.908</span>
<span class="t" style="left:402.0px;top:790.0px;font-size:6.2px;color:#222;transform:scaleX(0.9702);">26.08.2015  20:18</span>
<div class="b" style="left:193px;top:798.6999999999999px;width:267px;height:11.1px;background:#fffce4;"></div>
<div class="b" style="left:196.5px;top:800.3px;width:4.5px;height:6.5px;background:#3a8ae0;border:0.500px solid #9ab8d8;"></div>
<span class="t" style="left:203.0px;top:801.1px;font-size:6.2px;color:#222;transform:scaleX(0.9600);">w10x4d.jpg</span>
<span class="t" style="left:375.0px;top:801.1px;font-size:6.2px;color:#222;transform:scaleX(0.9600);">494.213</span>
<span class="t" style="left:402.0px;top:801.1px;font-size:6.2px;color:#222;transform:scaleX(0.9702);">26.08.2015  16:36</span>
<div class="b" style="left:196.5px;top:811.4px;width:4.5px;height:6.5px;background:#3a8ae0;border:0.500px solid #9ab8d8;"></div>
<span class="t" style="left:203.0px;top:812.2px;font-size:6.2px;color:#222;transform:scaleX(0.9600);">w10dtx4c.jpg</span>
<span class="t" style="left:375.0px;top:812.2px;font-size:6.2px;color:#222;transform:scaleX(0.9600);">565.346</span>
<span class="t" style="left:402.0px;top:812.2px;font-size:6.2px;color:#222;transform:scaleX(0.9792);">26.08.2015  21:11</span>
<div class="b" style="left:193px;top:820.9px;width:267px;height:11.1px;background:#fffce4;"></div>
<div class="b" style="left:196.5px;top:822.5px;width:4.5px;height:6.5px;background:#3a8ae0;border:0.500px solid #9ab8d8;"></div>
<span class="t" style="left:203.0px;top:823.3px;font-size:6.2px;color:#222;transform:scaleX(0.9600);">w10dtx4b.jpg</span>
<span class="t" style="left:375.0px;top:823.3px;font-size:6.2px;color:#222;transform:scaleX(0.9600);">636.210</span>
<span class="t" style="left:402.0px;top:823.3px;font-size:6.2px;color:#222;transform:scaleX(0.9702);">26.08.2015  21:10</span>
<div class="b" style="left:196.5px;top:833.5999999999999px;width:4.5px;height:6.5px;background:#3a8ae0;border:0.500px solid #9ab8d8;"></div>
<span class="t" style="left:203.0px;top:834.4px;font-size:6.2px;color:#222;transform:scaleX(0.9600);">w10dtx4a.jpg</span>
<span class="t" style="left:375.0px;top:834.4px;font-size:6.2px;color:#222;transform:scaleX(0.9600);">444.722</span>
<span class="t" style="left:402.0px;top:834.4px;font-size:6.2px;color:#222;transform:scaleX(0.9792);">26.08.2015  21:11</span>
<div class="b" style="left:193px;top:843.0999999999999px;width:267px;height:11.1px;background:#fffce4;"></div>
<div class="b" style="left:196.5px;top:844.6999999999999px;width:4.5px;height:6.5px;background:#3a8ae0;border:0.500px solid #9ab8d8;"></div>
<span class="t" style="left:203.0px;top:845.5px;font-size:6.2px;color:#222;transform:scaleX(0.9600);">w10dtx2b.jpg</span>
<span class="t" style="left:375.0px;top:845.5px;font-size:6.2px;color:#222;transform:scaleX(0.9600);">404.447</span>
<span class="t" style="left:402.0px;top:845.5px;font-size:6.2px;color:#222;transform:scaleX(0.9702);">26.08.2015  21:02</span>
<div class="b" style="left:196.5px;top:855.8px;width:4.5px;height:6.5px;background:#3a8ae0;border:0.500px solid #9ab8d8;"></div>
<span class="t" style="left:203.0px;top:856.6px;font-size:6.2px;color:#222;transform:scaleX(0.9600);">w10dtx2a.jpg</span>
<span class="t" style="left:375.0px;top:856.6px;font-size:6.2px;color:#222;transform:scaleX(0.9600);">434.083</span>
<span class="t" style="left:402.0px;top:856.6px;font-size:6.2px;color:#222;transform:scaleX(0.9702);">26.08.2015  21:01</span>
<div class="b" style="left:193px;top:865.3px;width:267px;height:11.1px;background:#fffce4;"></div>
<div class="b" style="left:196.5px;top:866.9px;width:4.5px;height:6.5px;background:#3a8ae0;border:0.500px solid #9ab8d8;"></div>
<span class="t" style="left:203.0px;top:867.7px;font-size:6.2px;color:#222;transform:scaleX(0.9600);">w10d3.jpg</span>
<span class="t" style="left:375.0px;top:867.7px;font-size:6.2px;color:#222;transform:scaleX(0.9600);">508.995</span>
<span class="t" style="left:402.0px;top:867.7px;font-size:6.2px;color:#222;transform:scaleX(0.9702);">26.08.2015  16:26</span>
<div class="b" style="left:196.5px;top:878.0px;width:4.5px;height:6.5px;background:#3a8ae0;border:0.500px solid #9ab8d8;"></div>
<span class="t" style="left:203.0px;top:878.8px;font-size:6.2px;color:#222;transform:scaleX(0.9600);">w10dt2.jpg</span>
<span class="t" style="left:375.0px;top:878.8px;font-size:6.2px;color:#222;transform:scaleX(0.9600);">302.560</span>
<span class="t" style="left:402.0px;top:878.8px;font-size:6.2px;color:#222;transform:scaleX(0.9702);">26.08.2015  00:08</span>
<div class="b" style="left:193px;top:887.4999999999999px;width:267px;height:11.1px;background:#fffce4;"></div>
<div class="b" style="left:196.5px;top:889.0999999999999px;width:4.5px;height:6.5px;background:#3a8ae0;border:0.500px solid #9ab8d8;"></div>
<span class="t" style="left:203.0px;top:889.9px;font-size:6.2px;color:#222;transform:scaleX(0.9600);">w10dt1.jpg</span>
<span class="t" style="left:375.0px;top:889.9px;font-size:6.2px;color:#222;transform:scaleX(0.9600);">333.868</span>
<span class="t" style="left:402.0px;top:889.9px;font-size:6.2px;color:#222;transform:scaleX(0.9702);">25.08.2015  23:58</span>
<div class="b" style="left:196.5px;top:900.1999999999999px;width:4.5px;height:6.5px;background:#3a8ae0;border:0.500px solid #9ab8d8;"></div>
<span class="t" style="left:203.0px;top:901.0px;font-size:6.2px;color:#222;transform:scaleX(0.9600);">w10dtx4.jpg</span>
<span class="t" style="left:375.0px;top:901.0px;font-size:6.2px;color:#222;transform:scaleX(0.9600);">402.385</span>
<span class="t" style="left:402.0px;top:901.0px;font-size:6.2px;color:#222;transform:scaleX(0.9702);">25.08.2015  23:48</span>
<div class="b" style="left:193px;top:909.6999999999999px;width:267px;height:11.1px;background:#fffce4;"></div>
<div class="b" style="left:196.5px;top:911.3px;width:4.5px;height:6.5px;background:#3a8ae0;border:0.500px solid #9ab8d8;"></div>
<span class="t" style="left:203.0px;top:912.1px;font-size:6.2px;color:#222;transform:scaleX(0.9600);">w10pers2.gif</span>
<span class="t" style="left:378.3px;top:912.1px;font-size:6.2px;color:#222;transform:scaleX(0.9600);">15.602</span>
<span class="t" style="left:402.0px;top:912.1px;font-size:6.2px;color:#222;transform:scaleX(0.9702);">25.08.2015  17:36</span>
<div class="b" style="left:196.5px;top:922.4px;width:4.5px;height:6.5px;background:#3a8ae0;border:0.500px solid #9ab8d8;"></div>
<span class="t" style="left:203.0px;top:923.2px;font-size:6.2px;color:#222;transform:scaleX(0.9600);">w10pers1.gif</span>
<span class="t" style="left:378.3px;top:923.2px;font-size:6.2px;color:#222;transform:scaleX(0.9600);">31.509</span>
<span class="t" style="left:402.0px;top:923.2px;font-size:6.2px;color:#222;transform:scaleX(0.9702);">25.08.2015  17:36</span>
<div class="b" style="left:193px;top:931.9px;width:267px;height:11.1px;background:#fffce4;"></div>
<div class="b" style="left:196.5px;top:933.5px;width:4.5px;height:6.5px;background:#3a8ae0;border:0.500px solid #9ab8d8;"></div>
<span class="t" style="left:203.0px;top:934.3px;font-size:6.2px;color:#222;transform:scaleX(0.9600);">w10sliste1b.gif</span>
<span class="t" style="left:378.7px;top:934.3px;font-size:6.2px;color:#222;transform:scaleX(0.9600);">11.250</span>
<span class="t" style="left:402.0px;top:934.3px;font-size:6.2px;color:#222;transform:scaleX(0.9702);">25.08.2015  17:34</span>
<div class="b" style="left:196.5px;top:944.5999999999999px;width:4.5px;height:6.5px;background:#3a8ae0;border:0.500px solid #9ab8d8;"></div>
<span class="t" style="left:203.0px;top:945.4px;font-size:6.2px;color:#222;transform:scaleX(0.9600);">w10sliste1a.gif</span>
<span class="t" style="left:381.6px;top:945.4px;font-size:6.2px;color:#222;transform:scaleX(0.9600);">5.590</span>
<span class="t" style="left:402.0px;top:945.4px;font-size:6.2px;color:#222;transform:scaleX(0.9702);">25.08.2015  17:33</span>
<div class="b" style="left:330px;top:732px;width:0.5px;height:224px;background:#eee;"></div>
<div class="b" style="left:398.5px;top:732px;width:0.5px;height:224px;background:#eee;"></div>
<div class="b" style="left:460px;top:732px;width:6.5px;height:224px;background:#f4f4f4;"></div>
<div class="b" style="left:460.5px;top:738px;width:5.5px;height:11px;background:#c8c8c8;"></div>
<div class="b" style="left:193px;top:957px;width:273px;height:7px;background:#f0f0f0;"></div>
<div class="b" style="left:200px;top:958px;width:222px;height:5px;background:#c8c8c8;"></div>
<div class="b" style="left:193px;top:966.5px;width:273px;height:7px;background:#fffbd0;border:0.500px solid #a9c4e8;"></div>
<div class="b" style="left:389.5px;top:966.5px;width:0.5px;height:7px;background:#a9c4e8;"></div>
<span class="t" style="left:194.0px;top:967.8px;font-size:5px;color:#222;transform:scaleX(1.0846);">0/3 Ordner, 0/290 Dateien markiert</span>
<span class="t" style="left:392.0px;top:967.8px;font-size:5px;color:#222;transform:scaleX(1.0607);">79% belegt, 18,5 GiB verfügbar</span>
<div class="b" style="left:193px;top:975px;width:273px;height:12.5px;background:#d6e6fb;border-bottom:0.500px solid #88b0e8;"></div>
<div class="b" style="left:195px;top:979.5px;width:5px;height:5px;background:#000;border-radius:3px;"></div>
<span class="t" style="left:203.0px;top:979.8px;font-size:5px;color:#444;">(D) w81</span>
<div class="b" style="left:223px;top:976px;width:0.5px;height:11px;background:#88b0e8;"></div>
<span class="t" style="left:194.5px;top:991.6px;font-size:5.2px;color:#222;">Ordner</span>
<span class="t" style="left:217.0px;top:991.8px;font-size:5px;color:#88a8d8;">Dateiablage</span>
<div class="b" style="left:214.5px;top:990px;width:32px;height:9px;border:0.500px solid #b0c8e8;"></div>
<div class="b" style="left:193px;top:1000px;width:273px;height:0.5px;background:#88b0e8;"></div>
<span class="t" style="left:474.0px;top:724.4px;font-size:6px;color:#222;transform:scaleX(1.1111);">◂▸</span>
<div class="b" style="left:473px;top:737px;width:11px;height:10px;background:#58b058;opacity:.800;border-radius:2px;"></div>
<div class="b" style="left:473px;top:784px;width:11px;height:10px;background:#4a88d0;opacity:.800;border-radius:2px;"></div>
<div class="b" style="left:473px;top:831px;width:11px;height:10px;background:#b0a080;opacity:.800;border-radius:2px;"></div>
<div class="b" style="left:473px;top:879px;width:11px;height:10px;background:#4a5a9a;opacity:.800;border-radius:2px;"></div>
<div class="b" style="left:473px;top:926px;width:11px;height:10px;background:#666;opacity:.800;border-radius:2px;"></div>
<div class="b" style="left:473px;top:975px;width:11px;height:10px;background:#7ab0e0;opacity:.800;border-radius:2px;"></div>
<div class="b" style="left:492px;top:724px;width:275px;height:7.5px;background:linear-gradient(180deg,#fcb860,#f59a28);"></div>
<span class="t" style="left:494.0px;top:725.5px;font-size:5.3px;color:#5a3000;transform:scaleX(1.0197);">FTP-Standorte ▸</span>
<span class="t" style="left:738.0px;top:725.8px;font-size:5px;color:#5a3000;transform:scaleX(1.4179);">⟍ ‥ ⊟ ˄</span>
<div class="b" style="left:492px;top:731.5px;width:275px;height:175px;background:#fff;"></div>
<span class="t" style="left:495.0px;top:734.9px;font-size:6px;color:#222;transform:scaleX(0.9997);">Name</span>
<span class="t" style="left:563.0px;top:734.9px;font-size:6px;color:#222;transform:scaleX(1.0319);">Kommentar</span>
<span class="t" style="left:621.0px;top:734.9px;font-size:6px;color:#222;transform:scaleX(1.0195);">Letzter Be…</span>
<div class="b" style="left:492px;top:743.5px;width:167px;height:10.5px;background:#d9d9d9;"></div>
<div class="b" style="left:492px;top:754px;width:167px;height:11px;background:#fffce4;"></div>
<div class="b" style="left:560px;top:732px;width:0.5px;height:174px;background:#eee;"></div>
<div class="b" style="left:618px;top:732px;width:0.5px;height:174px;background:#eee;"></div>
<div class="b" style="left:659px;top:732px;width:0.5px;height:174px;background:#eee;"></div>
<div class="b" style="left:494px;top:744.3px;width:7px;height:5px;background:#3a98e8;"></div>
<span class="t" style="left:502.0px;top:745.6px;font-size:6.2px;color:#222;">cmh-soft</span>
<span class="t" style="left:563.0px;top:745.6px;font-size:6.2px;color:#222;">cmh_homepage</span>
<span class="t" style="left:621.0px;top:745.6px;font-size:6.2px;color:#222;">22.08.2015…</span>
<div class="b" style="left:494px;top:755.4px;width:7px;height:5px;background:#3a98e8;"></div>
<span class="t" style="left:502.0px;top:756.7px;font-size:6.2px;color:#222;">Tilp-1&amp;1</span>
<span class="t" style="left:563.0px;top:756.7px;font-size:6.2px;color:#222;">Tilps Seite</span>
<span class="t" style="left:621.0px;top:756.7px;font-size:6.2px;color:#222;">26.08.2015…</span>
<div class="b" style="left:492px;top:907px;width:275px;height:1.5px;background:#88b0e8;"></div>
<div class="b" style="left:492px;top:909px;width:275px;height:48px;background:#fff;"></div>
<span class="t" style="left:492.5px;top:912.7px;font-size:5.7px;color:#2020d0;transform:scaleX(0.9700);">RETR w10.htm</span>
<span class="t" style="left:492.5px;top:922.0px;font-size:5.7px;color:#20a020;transform:scaleX(0.9700);">150 Opening ASCII mode data connection for w10.htm (42350 bytes)</span>
<span class="t" style="left:492.5px;top:931.4px;font-size:5.7px;color:#20a020;transform:scaleX(0.9700);">226 Transfer complete</span>
<span class="t" style="left:492.5px;top:940.7px;font-size:5.7px;color:#2020d0;transform:scaleX(0.9700);">QUIT</span>
<span class="t" style="left:492.5px;top:950.1px;font-size:5.7px;color:#222;transform:scaleX(0.9700);">Verbindung zu www.tilp-wn.de getrennt</span>
<div class="b" style="left:760px;top:909px;width:7px;height:48px;background:#f4f4f4;"></div>
<div class="b" style="left:760.5px;top:940px;width:5.5px;height:7px;background:#c8c8c8;"></div>
<div class="b" style="left:492px;top:957px;width:275px;height:6.5px;background:#f0f0f0;"></div>
<div class="b" style="left:500px;top:958px;width:8px;height:4.5px;background:#c8c8c8;"></div>
<div class="b" style="left:492px;top:966.5px;width:275px;height:7px;background:#fffbd0;border:0.500px solid #a9c4e8;"></div>
<span class="t" style="left:493.0px;top:967.8px;font-size:5px;color:#222;transform:scaleX(1.0774);">1/2 Ordner, 0/0 Dateien markiert (0 Bytes)</span>
<div class="b" style="left:492px;top:975px;width:275px;height:12.5px;background:#d6e6fb;border-bottom:0.500px solid #88b0e8;"></div>
<div class="b" style="left:494px;top:979.5px;width:5px;height:5px;background:#000;border-radius:3px;"></div>
<span class="t" style="left:502.0px;top:979.8px;font-size:5px;color:#444;transform:scaleX(1.0672);">(3) FTP-Standorte</span>
<div class="b" style="left:547px;top:976px;width:0.5px;height:11px;background:#88b0e8;"></div>
<span class="t" style="left:493.5px;top:991.6px;font-size:5.2px;color:#222;">Ordner</span>
<span class="t" style="left:516.0px;top:991.8px;font-size:5px;color:#88a8d8;">Dateiablage</span>
<div class="b" style="left:513.5px;top:990px;width:32px;height:9px;border:0.500px solid #b0c8e8;"></div>
<div class="b" style="left:492px;top:1000px;width:275px;height:0.5px;background:#88b0e8;"></div>
<div class="b" style="left:192px;top:1002px;width:575px;height:10.5px;background:#fff;border:0.500px solid #a0b8d8;"></div>
<span class="t" style="left:194.0px;top:1004.8px;font-size:5.5px;color:#222;">C:\&gt;</span>
<span class="t" style="left:761.0px;top:1004.4px;font-size:6px;color:#666;">⌄</span>
</div></div>
</div>
<!-- ================= TASKBAR ================= -->
<div id="tb">
<div class="abs0" style="left:0;top:-1030px">
<svg class="b" style="left:20px;top:1045px;" width="21" height="21" viewBox="0 0 21 21"><path d="M0 3l8.500-1.200v8h-8.500zM9.700 1.600l11.300-1.600v9.800h-11.300zM0 11h8.500v8l-8.500-1.200zM9.700 11h11.300v10l-11.300-1.600z" fill="#fff"/></svg>
<svg class="b" style="left:79px;top:1045px;" width="23" height="22" viewBox="0 0 23 22"><circle cx="14" cy="8" r="6.800" fill="none" stroke="#fff" stroke-width="1.600"/><path d="M9.300 13l-8 8" stroke="#fff" stroke-width="1.800"/></svg>
<svg class="b" style="left:137px;top:1046px;" width="26" height="19" viewBox="0 0 26 19"><rect x="5" y="1" width="16" height="17" fill="none" stroke="#fff" stroke-width="1.500"/><path d="M3 3.500h-2v12h2M23 3.500h2v12h-2" fill="none" stroke="#fff" stroke-width="1.400"/></svg>
<svg class="b" style="left:196px;top:1042px;" width="30" height="25" viewBox="0 0 30 25"><path d="M1 4a1 1 0 0 1 1-1h8l2 2.500h16a1 1 0 0 1 1 1v17.500h-28z" fill="#f7d057"/><rect x="3" y="4.500" width="6" height="1.500" fill="#fff" opacity=".800"/><path d="M1 8h28v16h-28z" fill="#fbe388"/><path d="M7 24v-8.500a1 1 0 0 1 1-1h14a1 1 0 0 1 1 1v8.500z" fill="#29a8ee"/><rect x="10.500" y="18.500" width="9" height="5.500" fill="#fbe388"/></svg>
<svg class="b" style="left:256.5px;top:1042px;" width="26" height="26" viewBox="0 0 26 26"><path fill-rule="evenodd" d="M1 12C1 5 6 .500 13.500 .500C21 .500 25.500 5.500 25.500 13V15.500H9C9.300 19.500 12.500 21.300 16.500 21.300C19.500 21.300 22 20.500 24.300 19.200V24C22 25.200 19 26 15.500 26C7.500 26 3 21.500 3 15C3 11 5 8 8 6.300C4.800 7.300 2.300 9.500 1 12ZM9.100 10.800H18.300C18.200 7.500 16.300 5.800 13.600 5.800C11 5.800 9.500 7.800 9.100 10.800Z" fill="#1d86e2"/></svg>
<svg class="b" style="left:309px;top:1040px;" width="29" height="29" viewBox="0 0 28 28"><defs><radialGradient id="fg1" cx="55%" cy="35%" r="60%"><stop offset="0" stop-color="#7fc4f4"/><stop offset=".6" stop-color="#2f7fd6"/><stop offset="1" stop-color="#1b3f94"/></radialGradient><linearGradient id="fg2" x1="0" y1="0" x2="0" y2="1"><stop offset="0" stop-color="#f8c42a"/><stop offset=".45" stop-color="#f08a1c"/><stop offset="1" stop-color="#d94a14"/></linearGradient></defs><circle cx="14.500" cy="13.500" r="11.500" fill="url(#fg1)"/><path d="M2.200 8.500c.300-1.800 1.200-3.400 2.300-4.500c-.200 1.300 0 2.300.600 3.100c1.100-1.900 3-3.100 5.100-3.400c-1.500 1.200-2.300 2.700-2.200 4.300c1.500.300 2.800.200 3.800 1.300c-.800 1.300-2.400 1.500-3.400 2.300c-.600 1.700.300 3.700 2 4.600c2.300 1.200 5.300.500 7-1.500c1.300-1.600 1.600-3.600 1-5.400c1.600 1.300 2.400 3.100 2.500 4.900c.600-1.700.700-3.700.100-5.700c1.900 2.600 2.400 6.100 1.300 9.300c-1.700 5-6.700 8.200-12 7.600c-6.200-.700-10.800-6-10.600-12.200c0-1.700.400-3.300 1-4.700z" fill="url(#fg2)"/></svg>
<span class="t" style="left:344.0px;top:1045.6px;font-size:17px;color:#fff;transform:scaleX(0.8203);">Tilps Page: Wi...</span>
<svg class="b" style="left:472px;top:1040px;" width="28" height="28" viewBox="0 0 28 28"><defs><radialGradient id="sg280" cx="40%" cy="35%" r="70%"><stop offset="0" stop-color="#fff"/><stop offset=".6" stop-color="#dfe6ee"/><stop offset="1" stop-color="#8c9cb0"/></radialGradient></defs><circle cx="14" cy="14" r="13.500" fill="url(#sg280)"/><path d="M22 8.500c-2-3-6-4-10-3.500s-6.500 3-6 5.500s3 3.500 8 4s6 1 6 2.500s-3 2.500-6 2.500s-6-1-8-3" fill="none" stroke="#2a4a8a" stroke-width="5.200" stroke-linecap="round"/><path d="M22 8.500c-2-3-6-4-10-3.500s-6.500 3-6 5.500s3 3.500 8 4s6 1 6 2.500s-3 2.500-6 2.500s-6-1-8-3" fill="none" stroke="#f2d21c" stroke-width="3.200" stroke-linecap="round"/></svg>
<span class="t" style="left:505.5px;top:1046.1px;font-size:17px;color:#fff;transform:scaleX(0.8466);">SpeedComma...</span>
<svg class="b" style="left:633px;top:1039px;" width="30" height="30" viewBox="0 0 30 30"><ellipse cx="12.500" cy="14" rx="11.500" ry="9.500" fill="#d9a26c" transform="rotate(-22 12.500 14)"/><ellipse cx="9" cy="19" rx="2.500" ry="2" fill="#0b2a52"/><circle cx="7" cy="11" r="2.300" fill="#d83030"/><circle cx="12" cy="7.500" r="2.300" fill="#3070d8"/><circle cx="17.500" cy="8" r="2.200" fill="#e8d030"/><circle cx="16" cy="17" r="2.200" fill="#30a848"/><path d="M27 1l2 1.500l-10 19l-3 1.500l.500-3z" fill="#3a62b8"/><path d="M16 23l3-1.500l-2.500-1.500z" fill="#f0d080"/><path d="M16 23l-1.500 5l3-3.500z" fill="#a05a20"/></svg>
<span class="t" style="left:668.0px;top:1046.1px;font-size:17px;color:#fff;transform:scaleX(0.7839);">Jasc Paint Sho...</span>
<div class="b" style="left:304px;top:1077px;width:150px;height:3px;background:#8dbde8;"></div>
<div class="b" style="left:466px;top:1077px;width:151px;height:3px;background:#8dbde8;"></div>
<div class="b" style="left:628px;top:1077px;width:151px;height:3px;background:#8dbde8;"></div>
<div class="b" style="left:1370px;top:1077px;width:150px;height:3px;background:#8dbde8;"></div>
<div class="b" style="left:805px;top:1041px;width:20px;height:24px;background:#f4f6fa;border:1px solid #c8d0dc;"></div><div class="b" style="left:809px;top:1054px;width:13px;height:1.5px;background:#c8d0dc;"></div><div class="b" style="left:809px;top:1058px;width:13px;height:1.5px;background:#c8d0dc;"></div><div class="b" style="left:797px;top:1044px;width:19px;height:19px;background:linear-gradient(135deg,#3a78d8,#1d4fa8);border-radius:1.500px;transform:skewY(-5deg);"></div><span class="t" style="left:799.5px;top:1045.6px;font-size:17px;font-weight:bold;color:#fff;transform:scaleX(0.8725);">W</span>
<div class="b" style="left:864px;top:1041px;width:20px;height:24px;background:#f4f6fa;border:1px solid #c8d0dc;"></div><div class="b" style="left:868px;top:1054px;width:13px;height:1.5px;background:#c8d0dc;"></div><div class="b" style="left:868px;top:1058px;width:13px;height:1.5px;background:#c8d0dc;"></div><div class="b" style="left:856px;top:1044px;width:19px;height:19px;background:linear-gradient(135deg,#4ab058,#1e7a38);border-radius:1.500px;transform:skewY(-5deg);"></div><span class="t" style="left:858.5px;top:1045.6px;font-size:17px;font-weight:bold;color:#fff;transform:scaleX(1.2346);">X</span>
<div class="b" style="left:922px;top:1041px;width:20px;height:24px;background:#f4f6fa;border:1px solid #c8d0dc;"></div><div class="b" style="left:926px;top:1054px;width:13px;height:1.5px;background:#c8d0dc;"></div><div class="b" style="left:926px;top:1058px;width:13px;height:1.5px;background:#c8d0dc;"></div><div class="b" style="left:914px;top:1044px;width:19px;height:19px;background:linear-gradient(135deg,#f08038,#d0481c);border-radius:1.500px;transform:skewY(-5deg);"></div><span class="t" style="left:916.5px;top:1045.6px;font-size:17px;font-weight:bold;color:#fff;transform:scaleX(1.2346);">P</span>
<svg class="b" style="left:975px;top:1041px;" width="29" height="30" viewBox="0 0 29 30"><circle cx="13.500" cy="13.500" r="12.500" fill="#1a1008" stroke="#5a3818" stroke-width="2"/><circle cx="13.500" cy="13.500" r="9" fill="none" stroke="#8a5a28" stroke-width="1" stroke-dasharray="1 2"/><path d="M13.500 13.500v-9" stroke="#2a60e0" stroke-width="2"/><path d="M13.500 13.500l9 3" stroke="#f0d020" stroke-width="2"/><path d="M7 29a8 8 0 0 1 16 0z" fill="#f0c020"/></svg><span class="t" style="left:985.5px;top:1063.6px;font-size:7px;font-weight:bold;color:#3a2000;">15</span>
<svg class="b" style="left:1032px;top:1041px;" width="29" height="30" viewBox="0 0 29 30"><circle cx="13.500" cy="13.500" r="12.500" fill="#1a1008" stroke="#5a3818" stroke-width="2"/><circle cx="13.500" cy="13.500" r="9" fill="none" stroke="#8a5a28" stroke-width="1" stroke-dasharray="1 2"/><path d="M13.500 13.500v-9" stroke="#2a60e0" stroke-width="2"/><path d="M13.500 13.500l9 3" stroke="#f0d020" stroke-width="2"/><path d="M7 29a8 8 0 0 1 16 0z" fill="#f0c020"/></svg><span class="t" style="left:1042.5px;top:1063.6px;font-size:7px;font-weight:bold;color:#3a2000;">16</span>
<div class="b" style="left:1088px;top:1040px;width:31px;height:30px;background:#c9efc4;border:1.500px solid #e0305c;"></div><span class="t" style="left:1092.0px;top:1042.4px;font-size:9px;font-weight:bold;color:#1e8a1e;transform:scaleX(0.8665);">ciM</span><div class="b" style="left:1096px;top:1043px;width:1.5px;height:24px;background:#1e8a1e;"></div><div class="b" style="left:1100.5px;top:1047px;width:1.5px;height:20px;background:#1e8a1e;"></div><div class="b" style="left:1091px;top:1052px;width:24px;height:1.5px;background:#1e8a1e;"></div><div class="b" style="left:1092px;top:1058px;width:22px;height:1.5px;background:#1e8a1e;"></div><span class="t" style="left:1103.0px;top:1052.1px;font-size:7px;font-weight:bold;color:#1e8a1e;">V</span><span class="t" style="left:1110.0px;top:1061.6px;font-size:7px;font-weight:bold;color:#1e8a1e;">P</span>
<div class="b" style="left:1146px;top:1040px;width:31px;height:30px;background:#c9efc4;border:1.500px solid #1ea01e;"></div><span class="t" style="left:1150.0px;top:1042.4px;font-size:9px;font-weight:bold;color:#1e8a1e;transform:scaleX(0.8665);">ciM</span><div class="b" style="left:1154px;top:1043px;width:1.5px;height:24px;background:#1e8a1e;"></div><div class="b" style="left:1158.5px;top:1047px;width:1.5px;height:20px;background:#1e8a1e;"></div><div class="b" style="left:1149px;top:1052px;width:24px;height:1.5px;background:#1e8a1e;"></div>
<svg class="b" style="left:1204px;top:1040px;" width="30" height="30" viewBox="0 0 30 30"><path d="M2 4h15l5 5v19h-20z" fill="#f4f4f4" stroke="#9a9a9a"/><rect x="2.500" y="11" width="19" height="15" fill="#8ad040"/><path d="M6 19c2-4 6-5 9-2s2 6-2 6" fill="none" stroke="#2a5a10" stroke-width="1.600"/><circle cx="10" cy="14" r="2" fill="#fff" stroke="#2a5a10"/><path d="M27 1l2 1.500l-7 14l-2.500 1.500l.500-3z" fill="#e8a820" stroke="#a07010" stroke-width=".500"/></svg>
<svg class="b" style="left:1261px;top:1040px;" width="30" height="30" viewBox="0 0 30 30"><ellipse cx="12" cy="11" rx="11" ry="8.500" fill="#e8ecf4" stroke="#d83838" stroke-width="1.600"/><path d="M7 3l14 20M17 3l-9 14" stroke="#b8bcc8" stroke-width="2.200"/><circle cx="21" cy="25" r="3" fill="none" stroke="#2a88e0" stroke-width="2.200"/><circle cx="11" cy="21" r="3" fill="none" stroke="#2a88e0" stroke-width="2.200"/></svg>
<svg class="b" style="left:1319px;top:1040px;" width="30" height="30" viewBox="0 0 30 30"><path d="M10 2h16l-6 24h-17z" fill="#a8d4f0"/><path d="M10 2h16l-2 8c-6 3-12 2-17 1z" fill="#d4ecfb"/><path d="M26 2l2 2l-5 24l-3-2z" fill="#c8a050"/><path d="M3 26h17l3 2h-18z" fill="#e8e8e8"/></svg>
<svg class="b" style="left:1376px;top:1040px;" width="30" height="30" viewBox="0 0 30 30"><path d="M13 1l15 12l-10 16l-17-9z" fill="#e8e8e8" stroke="#222" stroke-width="1.200"/><path d="M13 1l15 12l-13 6l-13-8z" fill="#f8f8f8" stroke="#222" stroke-width="1"/><path d="M7 11l6-3l4 3l-6 3zM14 8l5-2.500l4 3l-5 2.500zM12 15l6-3l4 3l-6 3z" fill="#555"/><path d="M2 12v8l16 9v-9z" fill="#b0b0b0" stroke="#222" stroke-width="1"/><path d="M3 15l14 8M3 18l14 8" stroke="#444" stroke-width="1"/></svg>
<span class="t" style="left:1410.5px;top:1046.1px;font-size:17px;color:#fff;transform:scaleX(0.8303);">phase 5.6</span>
<svg class="b" style="left:1540px;top:1050px;" width="18" height="11" viewBox="0 0 18 11"><path d="M1.500 9.500l7.500-7.500l7.500 7.500" fill="none" stroke="#fff" stroke-width="1.600"/></svg>
<svg class="b" style="left:1579px;top:1049px;" width="22" height="13" viewBox="0 0 22 13"><rect x="1" y="1" width="18" height="11" fill="none" stroke="#fff" stroke-width="1.400"/><rect x="19.500" y="4" width="2" height="5" fill="#fff"/><rect x="3" y="3" width="9" height="7" fill="#fff"/></svg>
<svg class="b" style="left:1621px;top:1047px;" width="18" height="18" viewBox="0 0 18 18"><path d="M2 16.500a14 14 0 0 1 14-14M6 16.500a10 10 0 0 1 10-10M10 16.500a6 6 0 0 1 6-6" fill="none" stroke="#fff" stroke-width="1.400"/><rect x="13" y="13.500" width="3.500" height="3.500" fill="#fff"/></svg>
<svg class="b" style="left:1658px;top:1047px;" width="22" height="18" viewBox="0 0 22 18"><path d="M1 6.500h3.500l4.500-4.500v14l-4.500-4.500h-3.500z" fill="none" stroke="#fff" stroke-width="1.300"/><path d="M11.500 6.500a4 4 0 0 1 0 5M14 4.500a7 7 0 0 1 0 9" fill="none" stroke="#fff" stroke-width="1.200"/><path d="M17 2.500a10 10 0 0 1 0 13" fill="none" stroke="#fff" stroke-width="1" opacity=".450"/></svg>
<svg class="b" style="left:1700px;top:1044px;" width="19" height="22" viewBox="0 0 19 22"><path d="M1 2c3 0 6-.500 8.500-2c2.500 1.500 5.500 2 8.500 2c0 9-2 15-8.500 19.500c-6.500-4.500-8.500-10.500-8.500-19.500z" fill="#e41e26" stroke="#fff" stroke-width="1.200"/></svg>
<span class="t" style="left:1704.0px;top:1050.0px;font-size:13px;font-weight:bold;color:#fff;transform:scaleX(1.0384);">G</span>
<svg class="b" style="left:1738px;top:1044px;" width="22" height="21" viewBox="0 0 22 21"><path d="M1 1h19.500v15h-8l-3 3.500l-3-3.500h-5.500z" fill="none" stroke="#fff" stroke-width="1.400"/><path d="M4.500 5.500h12.500M4.500 8.500h12.500M4.500 11.500h8" stroke="#fff" stroke-width="1.100"/></svg>
<svg class="b" style="left:1778px;top:1046px;" width="32" height="18" viewBox="0 0 32 18"><rect x="1" y="1" width="29.500" height="16" rx="1.500" fill="none" stroke="#fff" stroke-width="1.400"/><path d="M4.500 5h23M4.500 8.500h23" stroke="#fff" stroke-width="1.500" stroke-dasharray="1.700 1.700"/><path d="M7.500 13h16" stroke="#fff" stroke-width="1.500"/></svg>
<span class="t" style="left:1848.5px;top:1034.9px;font-size:15.5px;color:#fff;transform:scaleX(0.9152);">21:13</span>
<span class="t" style="left:1831.0px;top:1056.4px;font-size:15.5px;color:#fff;transform:scaleX(0.8959);">26.08.2015</span>
<div class="b" style="left:1914px;top:1032px;width:1px;height:46px;background:#5a6e88;"></div>
</div>
</div>
</body>
</html>
